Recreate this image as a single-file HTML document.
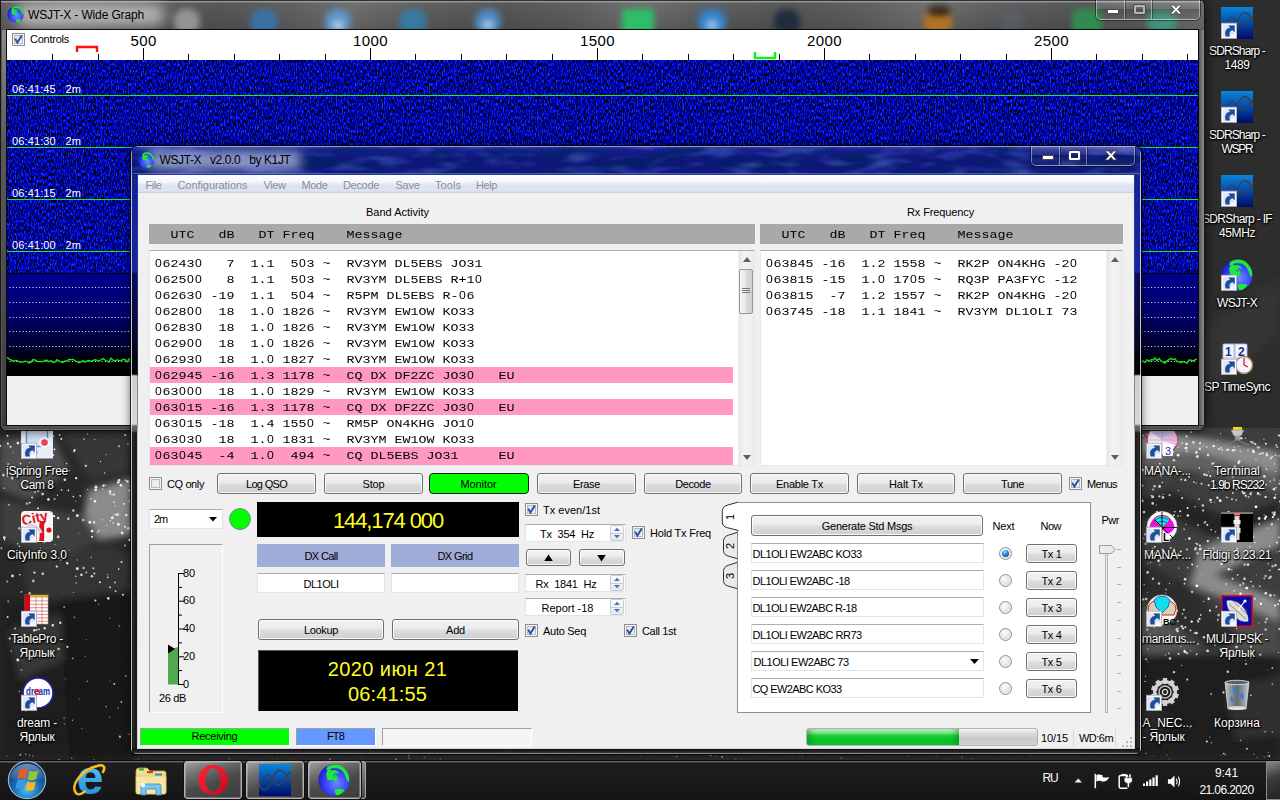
<!DOCTYPE html><html><head><meta charset="utf-8"><title>WSJT-X</title><style>
*{box-sizing:border-box;margin:0;padding:0}
html,body{width:1280px;height:800px;overflow:hidden;background:#2b2b2b;font-family:"Liberation Sans", "DejaVu Sans", sans-serif;font-size:11px;}
.t{position:absolute;white-space:pre;}
.abs{position:absolute}
.btn{position:absolute;border:1px solid #707070;border-radius:3px;background:linear-gradient(#f2f2f2 0,#ebebeb 48%,#dddddd 52%,#cfcfcf 100%);box-shadow:inset 0 0 0 1px rgba(255,255,255,.85);}
.edit{position:absolute;background:#fff;border:1px solid #dfe4ec;border-top-color:#abadb3;border-radius:1px}
.mono{font-family:"Liberation Mono", "DejaVu Sans Mono", monospace;}
.z{display:inline-block;width:8px;text-align:center;font-family:"Liberation Sans", "DejaVu Sans", sans-serif;font-size:12.2px;line-height:1}
.cb{position:absolute;width:13px;height:13px;border:1px solid #8e8f8f;background:linear-gradient(135deg,#dfe1e4,#f7f7f8);box-shadow:inset 0 0 0 1px #f4f4f4, inset 0 0 0 2px #b5bbc4;}
.lbl{color:#fff;text-shadow:0 1px 2px #000,0 0 3px #000,1px 1px 1px #000;}
</style></head><body>
<svg class="abs" style="left:0;top:0" width="1280" height="800" viewBox="0 0 1280 800"><defs><filter id="nz" x="0" y="0" width="100%" height="100%"><feTurbulence type="fractalNoise" baseFrequency="0.035" numOctaves="3" seed="4"/><feColorMatrix type="matrix" values="0 0 0 0 1  0 0 0 0 1  0 0 0 0 1  1.2 0 0 0 -0.38"/></filter><filter id="nz2" x="0" y="0" width="100%" height="100%"><feTurbulence type="fractalNoise" baseFrequency="0.6" numOctaves="2" seed="9"/><feColorMatrix type="matrix" values="0 0 0 0 1  0 0 0 0 1  0 0 0 0 1  0.9 0 0 0 -0.32"/></filter><filter id="bl"><feGaussianBlur stdDeviation="6"/></filter><filter id="bl2"><feGaussianBlur stdDeviation="0.6"/></filter><filter id="bl3"><feGaussianBlur stdDeviation="3.5"/></filter></defs><rect width="1280" height="800" fill="#2a2a2a"/><rect x="1200" y="0" width="80" height="430" fill="#2d2d2d"/><polygon points="1200,330 1280,280 1280,330 1200,400" fill="#363636" filter="url(#bl)"/><rect x="1138" y="428" width="142" height="232" fill="#3c3c3c"/><g filter="url(#bl3)"><polygon points="1138,436 1180,434 1280,452 1280,474 1200,452 1138,452" fill="#8c8c8c"/><polygon points="1138,452 1200,452 1280,474 1280,492 1190,470 1138,476" fill="#5e5e5e"/><polygon points="1138,500 1170,490 1230,520 1280,500 1280,520 1230,545 1170,515 1138,520" fill="#222"/><polygon points="1200,548 1280,520 1280,545 1215,575 1280,600 1280,622 1190,585" fill="#8a8a8a"/><polygon points="1138,560 1190,585 1240,640 1210,650 1138,590" fill="#2a2a2a"/><polygon points="1138,600 1200,650 1138,655" fill="#555"/><polygon points="1240,610 1280,625 1280,660 1230,655" fill="#4a4a4a"/><rect x="1138" y="655" width="142" height="105" fill="#1b1b1b"/><polygon points="1225,690 1280,675 1280,735 1235,740" fill="#2e2e2e"/><polygon points="1138,700 1180,720 1138,750" fill="#262626"/></g><rect x="0" y="428" width="134" height="332" fill="#262626"/><g filter="url(#bl3)"><polygon points="0,440 50,432 70,470 30,500 0,490" fill="#4e4e4e"/><polygon points="60,432 134,432 134,470 90,480" fill="#343434"/><polygon points="88,490 134,478 134,535 100,540 84,515" fill="#8a8a8a"/><polygon points="0,500 84,515 100,540 60,560 0,540" fill="#3e3e3e"/><polygon points="20,560 110,545 134,560 134,600 30,600" fill="#303030"/><rect x="0" y="600" width="134" height="160" fill="#1a1a1a"/><polygon points="8,630 60,615 75,655 20,680" fill="#343434"/><polygon points="60,600 134,590 134,760 70,760" fill="#151515"/></g><rect x="0" y="428" width="1280" height="372" fill="#fff" filter="url(#nz2)" opacity="0.07"/><g filter="url(#bl2)"><circle cx="1186.7" cy="451.3" r="1.2" fill="rgb(179,179,179)"/><circle cx="1255.3" cy="444.0" r="1.1" fill="rgb(234,234,234)"/><circle cx="1171.6" cy="443.0" r="0.9" fill="rgb(200,200,200)"/><circle cx="1154.5" cy="486.3" r="1.3" fill="rgb(185,185,185)"/><circle cx="1272.7" cy="512.7" r="1.1" fill="rgb(177,177,177)"/><circle cx="1221.6" cy="482.8" r="1.5" fill="rgb(175,175,175)"/><circle cx="1218.8" cy="449.0" r="0.9" fill="rgb(239,239,239)"/><circle cx="1158.3" cy="471.5" r="1.3" fill="rgb(193,193,193)"/><circle cx="1156.2" cy="505.1" r="0.7" fill="rgb(182,182,182)"/><circle cx="1217.6" cy="440.0" r="0.6" fill="rgb(196,196,196)"/><circle cx="1210.5" cy="500.1" r="1.3" fill="rgb(229,229,229)"/><circle cx="1222.8" cy="490.0" r="0.8" fill="rgb(193,193,193)"/><circle cx="1238.5" cy="463.2" r="1.1" fill="rgb(237,237,237)"/><circle cx="1210.3" cy="476.0" r="0.9" fill="rgb(247,247,247)"/><circle cx="1277.3" cy="447.1" r="0.9" fill="rgb(213,213,213)"/><circle cx="1163.0" cy="494.6" r="0.5" fill="rgb(255,255,255)"/><circle cx="1152.7" cy="503.4" r="1.3" fill="rgb(210,210,210)"/><circle cx="1188.9" cy="476.8" r="1.0" fill="rgb(228,228,228)"/><circle cx="1151.5" cy="444.0" r="0.8" fill="rgb(255,255,255)"/><circle cx="1151.0" cy="525.6" r="0.8" fill="rgb(243,243,243)"/><circle cx="1279.0" cy="537.2" r="0.8" fill="rgb(219,219,219)"/><circle cx="1264.4" cy="476.4" r="1.4" fill="rgb(215,215,215)"/><circle cx="1165.2" cy="447.0" r="0.6" fill="rgb(206,206,206)"/><circle cx="1159.8" cy="463.7" r="0.9" fill="rgb(233,233,233)"/><circle cx="1153.1" cy="489.5" r="1.0" fill="rgb(187,187,187)"/><circle cx="1255.1" cy="542.6" r="0.8" fill="rgb(223,223,223)"/><circle cx="1278.1" cy="519.4" r="0.9" fill="rgb(199,199,199)"/><circle cx="1162.8" cy="454.6" r="0.7" fill="rgb(199,199,199)"/><circle cx="1143.7" cy="538.4" r="0.7" fill="rgb(206,206,206)"/><circle cx="1142.6" cy="485.6" r="0.9" fill="rgb(242,242,242)"/><circle cx="1186.0" cy="448.1" r="1.4" fill="rgb(249,249,249)"/><circle cx="1232.4" cy="526.7" r="1.0" fill="rgb(241,241,241)"/><circle cx="1196.1" cy="483.1" r="0.6" fill="rgb(251,251,251)"/><circle cx="1197.3" cy="456.4" r="1.5" fill="rgb(226,226,226)"/><circle cx="1164.4" cy="475.5" r="0.6" fill="rgb(170,170,170)"/><circle cx="1220.2" cy="500.7" r="1.4" fill="rgb(248,248,248)"/><circle cx="1145.5" cy="543.9" r="1.1" fill="rgb(189,189,189)"/><circle cx="1229.5" cy="554.3" r="1.1" fill="rgb(230,230,230)"/><circle cx="1159.0" cy="540.7" r="1.5" fill="rgb(229,229,229)"/><circle cx="1208.3" cy="471.9" r="0.6" fill="rgb(213,213,213)"/><circle cx="1244.2" cy="493.3" r="1.2" fill="rgb(236,236,236)"/><circle cx="1145.2" cy="553.7" r="1.0" fill="rgb(188,188,188)"/><circle cx="1237.2" cy="549.0" r="1.3" fill="rgb(208,208,208)"/><circle cx="1277.0" cy="542.5" r="1.2" fill="rgb(203,203,203)"/><circle cx="1213.5" cy="548.3" r="0.9" fill="rgb(198,198,198)"/><circle cx="1215.5" cy="531.7" r="0.8" fill="rgb(198,198,198)"/><circle cx="1226.6" cy="532.9" r="1.3" fill="rgb(194,194,194)"/><circle cx="1253.2" cy="536.7" r="1.2" fill="rgb(199,199,199)"/><circle cx="1169.6" cy="495.1" r="1.2" fill="rgb(173,173,173)"/><circle cx="1251.0" cy="492.4" r="0.7" fill="rgb(247,247,247)"/><circle cx="1274.0" cy="489.2" r="1.4" fill="rgb(214,214,214)"/><circle cx="1273.8" cy="478.7" r="0.7" fill="rgb(199,199,199)"/><circle cx="1206.9" cy="475.2" r="1.0" fill="rgb(248,248,248)"/><circle cx="1258.0" cy="493.4" r="1.2" fill="rgb(252,252,252)"/><circle cx="1153.7" cy="516.6" r="1.4" fill="rgb(195,195,195)"/><circle cx="1208.0" cy="454.9" r="1.3" fill="rgb(212,212,212)"/><circle cx="1154.0" cy="553.1" r="1.2" fill="rgb(229,229,229)"/><circle cx="1197.4" cy="553.2" r="1.2" fill="rgb(191,191,191)"/><circle cx="1279.0" cy="435.5" r="1.1" fill="rgb(229,229,229)"/><circle cx="1253.3" cy="450.7" r="1.3" fill="rgb(230,230,230)"/><circle cx="1232.7" cy="476.9" r="1.0" fill="rgb(186,186,186)"/><circle cx="1145.0" cy="534.3" r="1.2" fill="rgb(183,183,183)"/><circle cx="1214.7" cy="551.5" r="0.9" fill="rgb(194,194,194)"/><circle cx="1256.0" cy="459.0" r="0.8" fill="rgb(207,207,207)"/><circle cx="1211.2" cy="529.8" r="0.8" fill="rgb(239,239,239)"/><circle cx="1199.8" cy="448.8" r="1.4" fill="rgb(215,215,215)"/><circle cx="1265.9" cy="516.8" r="1.3" fill="rgb(236,236,236)"/><circle cx="1200.0" cy="549.5" r="1.0" fill="rgb(238,238,238)"/><circle cx="1163.0" cy="497.4" r="1.4" fill="rgb(193,193,193)"/><circle cx="1226.0" cy="531.3" r="0.6" fill="rgb(188,188,188)"/><circle cx="1207.3" cy="524.8" r="1.1" fill="rgb(211,211,211)"/><circle cx="1236.2" cy="499.9" r="1.0" fill="rgb(183,183,183)"/><circle cx="1263.9" cy="439.3" r="0.7" fill="rgb(175,175,175)"/><circle cx="1248.6" cy="497.0" r="1.1" fill="rgb(178,178,178)"/><circle cx="1203.2" cy="510.4" r="1.0" fill="rgb(235,235,235)"/><circle cx="1169.5" cy="467.5" r="1.0" fill="rgb(231,231,231)"/><circle cx="1212.1" cy="463.7" r="1.0" fill="rgb(203,203,203)"/><circle cx="1269.3" cy="546.3" r="0.7" fill="rgb(227,227,227)"/><circle cx="1160.9" cy="447.6" r="0.9" fill="rgb(179,179,179)"/><circle cx="1234.6" cy="486.8" r="0.7" fill="rgb(208,208,208)"/><circle cx="1250.2" cy="546.8" r="0.7" fill="rgb(252,252,252)"/><circle cx="1233.1" cy="450.3" r="1.4" fill="rgb(229,229,229)"/><circle cx="1172.3" cy="553.9" r="0.9" fill="rgb(232,232,232)"/><circle cx="1164.5" cy="517.5" r="0.7" fill="rgb(225,225,225)"/><circle cx="1279.2" cy="483.7" r="0.9" fill="rgb(215,215,215)"/><circle cx="1186.0" cy="524.4" r="0.5" fill="rgb(240,240,240)"/><circle cx="1205.3" cy="522.0" r="0.9" fill="rgb(236,236,236)"/><circle cx="1228.1" cy="497.6" r="0.6" fill="rgb(199,199,199)"/><circle cx="1276.1" cy="445.4" r="0.8" fill="rgb(175,175,175)"/><circle cx="1267.0" cy="455.2" r="1.3" fill="rgb(224,224,224)"/><circle cx="1259.2" cy="518.5" r="1.4" fill="rgb(221,221,221)"/><circle cx="1162.6" cy="549.7" r="1.1" fill="rgb(211,211,211)"/><circle cx="1154.3" cy="439.4" r="1.2" fill="rgb(224,224,224)"/><circle cx="1265.5" cy="466.4" r="0.5" fill="rgb(181,181,181)"/><circle cx="1252.6" cy="442.7" r="1.4" fill="rgb(178,178,178)"/><circle cx="1178.5" cy="447.6" r="0.5" fill="rgb(240,240,240)"/><circle cx="1199.7" cy="549.2" r="1.1" fill="rgb(175,175,175)"/><circle cx="1214.7" cy="462.5" r="0.6" fill="rgb(190,190,190)"/><circle cx="1178.1" cy="455.2" r="1.4" fill="rgb(250,250,250)"/><circle cx="1184.1" cy="529.2" r="0.8" fill="rgb(234,234,234)"/><circle cx="1234.8" cy="466.6" r="1.3" fill="rgb(202,202,202)"/><circle cx="1147.1" cy="434.4" r="1.0" fill="rgb(194,194,194)"/><circle cx="1213.0" cy="463.4" r="0.9" fill="rgb(254,254,254)"/><circle cx="1255.0" cy="487.3" r="1.0" fill="rgb(220,220,220)"/><circle cx="1275.9" cy="471.4" r="0.7" fill="rgb(199,199,199)"/><circle cx="1189.3" cy="538.5" r="1.2" fill="rgb(251,251,251)"/><circle cx="1161.3" cy="558.6" r="1.5" fill="rgb(186,186,186)"/><circle cx="1144.0" cy="512.1" r="1.4" fill="rgb(225,225,225)"/><circle cx="1164.5" cy="442.8" r="1.3" fill="rgb(234,234,234)"/><circle cx="1234.5" cy="468.1" r="0.7" fill="rgb(207,207,207)"/><circle cx="1148.2" cy="455.7" r="0.8" fill="rgb(170,170,170)"/><circle cx="1178.3" cy="555.1" r="1.5" fill="rgb(240,240,240)"/><circle cx="1186.6" cy="436.4" r="1.4" fill="rgb(197,197,197)"/><circle cx="1191.2" cy="432.1" r="0.9" fill="rgb(230,230,230)"/><circle cx="1180.5" cy="516.0" r="0.7" fill="rgb(170,170,170)"/><circle cx="1154.5" cy="536.6" r="0.6" fill="rgb(245,245,245)"/><circle cx="1147.8" cy="434.9" r="0.8" fill="rgb(199,199,199)"/><circle cx="1153.7" cy="554.6" r="1.4" fill="rgb(189,189,189)"/><circle cx="1232.7" cy="523.6" r="1.4" fill="rgb(219,219,219)"/><circle cx="1247.5" cy="524.2" r="1.0" fill="rgb(206,206,206)"/><circle cx="1241.9" cy="514.3" r="0.5" fill="rgb(235,235,235)"/><circle cx="1228.6" cy="525.9" r="1.3" fill="rgb(187,187,187)"/><circle cx="1267.6" cy="528.4" r="1.1" fill="rgb(172,172,172)"/><circle cx="1256.0" cy="506.8" r="1.4" fill="rgb(252,252,252)"/><circle cx="1173.7" cy="436.0" r="0.6" fill="rgb(216,216,216)"/><circle cx="1274.4" cy="480.2" r="1.0" fill="rgb(176,176,176)"/><circle cx="1228.6" cy="512.2" r="1.2" fill="rgb(232,232,232)"/><circle cx="1178.4" cy="490.5" r="0.6" fill="rgb(234,234,234)"/><circle cx="1265.9" cy="443.8" r="1.0" fill="rgb(230,230,230)"/><circle cx="1176.8" cy="441.5" r="0.8" fill="rgb(196,196,196)"/><circle cx="1173.8" cy="515.2" r="1.0" fill="rgb(218,218,218)"/><circle cx="1152.6" cy="548.5" r="0.8" fill="rgb(175,175,175)"/><circle cx="1227.1" cy="514.3" r="0.6" fill="rgb(188,188,188)"/><circle cx="1187.8" cy="515.4" r="1.2" fill="rgb(249,249,249)"/><circle cx="1220.4" cy="433.6" r="0.6" fill="rgb(204,204,204)"/><circle cx="1276.2" cy="444.7" r="0.7" fill="rgb(232,232,232)"/><circle cx="1182.1" cy="498.1" r="1.0" fill="rgb(229,229,229)"/><circle cx="1247.9" cy="559.1" r="1.0" fill="rgb(209,209,209)"/><circle cx="1277.0" cy="551.8" r="0.5" fill="rgb(228,228,228)"/><circle cx="1152.6" cy="496.8" r="1.5" fill="rgb(204,204,204)"/><circle cx="1195.4" cy="549.3" r="1.4" fill="rgb(179,179,179)"/><circle cx="1222.2" cy="450.1" r="1.0" fill="rgb(216,216,216)"/><circle cx="1160.3" cy="537.0" r="1.0" fill="rgb(184,184,184)"/><circle cx="1239.1" cy="461.6" r="1.4" fill="rgb(232,232,232)"/><circle cx="1196.4" cy="452.4" r="1.4" fill="rgb(227,227,227)"/><circle cx="1197.9" cy="525.1" r="0.9" fill="rgb(218,218,218)"/><circle cx="1185.6" cy="539.5" r="0.5" fill="rgb(213,213,213)"/><circle cx="1257.8" cy="447.4" r="1.4" fill="rgb(171,171,171)"/><circle cx="1266.4" cy="469.1" r="0.9" fill="rgb(220,220,220)"/><circle cx="1195.8" cy="543.4" r="0.6" fill="rgb(224,224,224)"/><circle cx="1246.3" cy="541.3" r="0.8" fill="rgb(176,176,176)"/><circle cx="1257.2" cy="468.6" r="1.4" fill="rgb(201,201,201)"/><circle cx="1276.0" cy="487.8" r="0.8" fill="rgb(217,217,217)"/><circle cx="1250.3" cy="486.8" r="0.5" fill="rgb(250,250,250)"/><circle cx="1197.2" cy="544.1" r="1.1" fill="rgb(196,196,196)"/><circle cx="1241.3" cy="438.3" r="1.2" fill="rgb(227,227,227)"/><circle cx="1226.9" cy="449.7" r="1.4" fill="rgb(232,232,232)"/><circle cx="1148.8" cy="550.6" r="0.6" fill="rgb(230,230,230)"/><circle cx="1199.3" cy="468.1" r="0.8" fill="rgb(253,253,253)"/><circle cx="1177.9" cy="516.0" r="0.8" fill="rgb(241,241,241)"/><circle cx="1234.3" cy="447.3" r="1.1" fill="rgb(179,179,179)"/><circle cx="1170.7" cy="548.0" r="1.0" fill="rgb(198,198,198)"/><circle cx="1204.5" cy="474.6" r="1.3" fill="rgb(224,224,224)"/><circle cx="1161.3" cy="456.6" r="0.6" fill="rgb(213,213,213)"/><circle cx="1218.7" cy="472.9" r="0.9" fill="rgb(242,242,242)"/><circle cx="1169.9" cy="434.6" r="1.4" fill="rgb(219,219,219)"/><circle cx="1199.1" cy="499.1" r="0.9" fill="rgb(213,213,213)"/><circle cx="1245.8" cy="495.8" r="1.1" fill="rgb(216,216,216)"/><circle cx="1159.4" cy="496.4" r="1.1" fill="rgb(197,197,197)"/><circle cx="1154.8" cy="546.8" r="0.9" fill="rgb(252,252,252)"/><circle cx="1203.5" cy="554.1" r="1.3" fill="rgb(172,172,172)"/><circle cx="1159.6" cy="486.4" r="1.3" fill="rgb(230,230,230)"/><circle cx="1275.6" cy="494.7" r="0.6" fill="rgb(237,237,237)"/><circle cx="1260.1" cy="556.4" r="0.7" fill="rgb(183,183,183)"/><circle cx="1172.9" cy="451.5" r="1.5" fill="rgb(183,183,183)"/><circle cx="1271.9" cy="524.4" r="1.1" fill="rgb(228,228,228)"/><circle cx="1153.7" cy="531.4" r="0.5" fill="rgb(186,186,186)"/><circle cx="1174.1" cy="549.7" r="1.1" fill="rgb(208,208,208)"/><circle cx="1274.8" cy="512.2" r="1.0" fill="rgb(225,225,225)"/><circle cx="1238.4" cy="446.4" r="0.6" fill="rgb(237,237,237)"/><circle cx="1272.2" cy="456.5" r="0.8" fill="rgb(246,246,246)"/><circle cx="1142.2" cy="500.8" r="1.5" fill="rgb(205,205,205)"/><circle cx="1274.3" cy="514.5" r="1.4" fill="rgb(230,230,230)"/><circle cx="1214.6" cy="502.0" r="0.5" fill="rgb(222,222,222)"/><circle cx="1239.2" cy="471.3" r="0.5" fill="rgb(233,233,233)"/><circle cx="1264.1" cy="514.8" r="0.6" fill="rgb(199,199,199)"/><circle cx="1234.1" cy="550.4" r="0.7" fill="rgb(174,174,174)"/><circle cx="1238.0" cy="523.9" r="0.9" fill="rgb(220,220,220)"/><circle cx="1169.3" cy="534.0" r="1.2" fill="rgb(234,234,234)"/><circle cx="1151.3" cy="495.4" r="0.7" fill="rgb(194,194,194)"/><circle cx="1173.9" cy="460.3" r="1.3" fill="rgb(207,207,207)"/><circle cx="1157.0" cy="511.8" r="1.1" fill="rgb(198,198,198)"/><circle cx="1208.9" cy="548.5" r="0.6" fill="rgb(246,246,246)"/><circle cx="1162.2" cy="482.4" r="0.7" fill="rgb(246,246,246)"/><circle cx="1161.6" cy="438.6" r="0.6" fill="rgb(220,220,220)"/><circle cx="1204.1" cy="523.1" r="0.8" fill="rgb(184,184,184)"/><circle cx="1279.7" cy="551.2" r="0.8" fill="rgb(193,193,193)"/><circle cx="1232.0" cy="499.2" r="1.0" fill="rgb(209,209,209)"/><circle cx="1233.7" cy="480.5" r="0.9" fill="rgb(212,212,212)"/><circle cx="1203.1" cy="445.9" r="0.6" fill="rgb(180,180,180)"/><circle cx="1190.5" cy="650.8" r="0.6" fill="rgb(196,196,196)"/><circle cx="1194.5" cy="633.0" r="0.8" fill="rgb(225,225,225)"/><circle cx="1154.1" cy="627.0" r="0.7" fill="rgb(239,239,239)"/><circle cx="1268.9" cy="578.3" r="0.8" fill="rgb(230,230,230)"/><circle cx="1146.2" cy="599.0" r="1.2" fill="rgb(221,221,221)"/><circle cx="1147.6" cy="563.3" r="0.6" fill="rgb(177,177,177)"/><circle cx="1177.5" cy="631.0" r="1.3" fill="rgb(213,213,213)"/><circle cx="1192.1" cy="591.8" r="1.4" fill="rgb(175,175,175)"/><circle cx="1178.2" cy="628.1" r="0.8" fill="rgb(205,205,205)"/><circle cx="1183.0" cy="628.5" r="1.0" fill="rgb(251,251,251)"/><circle cx="1272.6" cy="566.2" r="1.2" fill="rgb(183,183,183)"/><circle cx="1207.6" cy="650.9" r="1.4" fill="rgb(219,219,219)"/><circle cx="1251.0" cy="646.8" r="1.2" fill="rgb(186,186,186)"/><circle cx="1270.1" cy="577.4" r="1.2" fill="rgb(208,208,208)"/><circle cx="1255.5" cy="633.4" r="1.0" fill="rgb(211,211,211)"/><circle cx="1260.9" cy="603.8" r="1.2" fill="rgb(246,246,246)"/><circle cx="1152.9" cy="578.7" r="1.2" fill="rgb(201,201,201)"/><circle cx="1198.3" cy="621.7" r="0.9" fill="rgb(239,239,239)"/><circle cx="1187.0" cy="653.1" r="1.3" fill="rgb(179,179,179)"/><circle cx="1178.6" cy="568.0" r="0.6" fill="rgb(233,233,233)"/><circle cx="1278.4" cy="652.4" r="0.7" fill="rgb(187,187,187)"/><circle cx="1199.5" cy="618.9" r="1.1" fill="rgb(238,238,238)"/><circle cx="1258.9" cy="623.1" r="0.6" fill="rgb(207,207,207)"/><circle cx="1182.5" cy="613.9" r="0.8" fill="rgb(203,203,203)"/><circle cx="1169.5" cy="583.5" r="0.7" fill="rgb(189,189,189)"/><circle cx="1180.8" cy="646.2" r="0.7" fill="rgb(178,178,178)"/><circle cx="1196.7" cy="654.3" r="1.0" fill="rgb(199,199,199)"/><circle cx="1231.7" cy="569.6" r="0.9" fill="rgb(174,174,174)"/><circle cx="1156.1" cy="605.1" r="1.2" fill="rgb(227,227,227)"/><circle cx="1268.2" cy="563.8" r="0.8" fill="rgb(185,185,185)"/><circle cx="1149.0" cy="617.0" r="1.2" fill="rgb(194,194,194)"/><circle cx="1270.4" cy="595.4" r="1.3" fill="rgb(227,227,227)"/><circle cx="1225.2" cy="633.6" r="1.1" fill="rgb(170,170,170)"/><circle cx="1156.6" cy="616.6" r="1.1" fill="rgb(197,197,197)"/><circle cx="1147.2" cy="592.3" r="0.5" fill="rgb(202,202,202)"/><circle cx="1147.3" cy="629.6" r="1.3" fill="rgb(171,171,171)"/><circle cx="1255.0" cy="598.9" r="0.8" fill="rgb(249,249,249)"/><circle cx="1185.1" cy="579.3" r="1.2" fill="rgb(240,240,240)"/><circle cx="1208.7" cy="598.8" r="1.2" fill="rgb(254,254,254)"/><circle cx="1217.9" cy="620.7" r="0.6" fill="rgb(190,190,190)"/><circle cx="1196.9" cy="585.8" r="1.4" fill="rgb(255,255,255)"/><circle cx="1184.4" cy="650.6" r="0.8" fill="rgb(242,242,242)"/><circle cx="1263.9" cy="599.3" r="0.5" fill="rgb(216,216,216)"/><circle cx="1230.9" cy="597.1" r="0.9" fill="rgb(170,170,170)"/><circle cx="1201.9" cy="574.9" r="0.6" fill="rgb(181,181,181)"/><circle cx="1198.1" cy="643.9" r="0.9" fill="rgb(190,190,190)"/><circle cx="1159.9" cy="564.9" r="0.6" fill="rgb(220,220,220)"/><circle cx="1154.3" cy="619.1" r="0.8" fill="rgb(234,234,234)"/><circle cx="1165.7" cy="593.1" r="0.6" fill="rgb(191,191,191)"/><circle cx="1269.7" cy="570.3" r="0.9" fill="rgb(195,195,195)"/><circle cx="1183.6" cy="639.5" r="0.5" fill="rgb(231,231,231)"/><circle cx="1185.4" cy="617.7" r="1.1" fill="rgb(181,181,181)"/><circle cx="1266.8" cy="618.9" r="1.2" fill="rgb(190,190,190)"/><circle cx="1230.4" cy="641.4" r="1.1" fill="rgb(248,248,248)"/><circle cx="1258.8" cy="638.8" r="0.7" fill="rgb(197,197,197)"/><circle cx="1147.8" cy="649.2" r="0.6" fill="rgb(215,215,215)"/><circle cx="1159.0" cy="583.5" r="1.2" fill="rgb(194,194,194)"/><circle cx="1147.7" cy="613.4" r="1.2" fill="rgb(174,174,174)"/><circle cx="1234.2" cy="590.8" r="0.9" fill="rgb(228,228,228)"/><circle cx="1217.9" cy="619.6" r="0.8" fill="rgb(223,223,223)"/><circle cx="1184.5" cy="583.7" r="0.9" fill="rgb(217,217,217)"/><circle cx="1203.7" cy="601.6" r="0.5" fill="rgb(249,249,249)"/><circle cx="1278.1" cy="604.2" r="0.9" fill="rgb(249,249,249)"/><circle cx="1249.6" cy="603.5" r="0.7" fill="rgb(230,230,230)"/><circle cx="1197.2" cy="566.4" r="0.8" fill="rgb(216,216,216)"/><circle cx="1154.7" cy="602.0" r="1.0" fill="rgb(175,175,175)"/><circle cx="1147.6" cy="572.4" r="1.3" fill="rgb(210,210,210)"/><circle cx="1249.3" cy="608.6" r="0.5" fill="rgb(234,234,234)"/><circle cx="1265.5" cy="622.0" r="1.2" fill="rgb(173,173,173)"/><circle cx="1260.3" cy="654.6" r="1.2" fill="rgb(184,184,184)"/><circle cx="1168.7" cy="653.3" r="0.9" fill="rgb(191,191,191)"/><circle cx="1236.7" cy="628.5" r="0.7" fill="rgb(214,214,214)"/><circle cx="1226.2" cy="584.0" r="0.8" fill="rgb(248,248,248)"/><circle cx="1179.9" cy="637.5" r="0.6" fill="rgb(234,234,234)"/><circle cx="1275.1" cy="605.6" r="1.0" fill="rgb(248,248,248)"/><circle cx="1211.8" cy="590.3" r="0.5" fill="rgb(193,193,193)"/><circle cx="1197.7" cy="620.5" r="0.8" fill="rgb(211,211,211)"/><circle cx="1265.6" cy="576.0" r="1.2" fill="rgb(184,184,184)"/><circle cx="1248.0" cy="564.6" r="1.3" fill="rgb(227,227,227)"/><circle cx="1218.6" cy="615.1" r="1.3" fill="rgb(183,183,183)"/><circle cx="1176.8" cy="610.9" r="1.3" fill="rgb(217,217,217)"/><circle cx="1178.5" cy="654.1" r="1.0" fill="rgb(216,216,216)"/><circle cx="1187.7" cy="567.7" r="0.7" fill="rgb(248,248,248)"/><circle cx="1244.6" cy="564.6" r="1.2" fill="rgb(202,202,202)"/><circle cx="1184.8" cy="651.8" r="1.3" fill="rgb(254,254,254)"/><circle cx="1265.6" cy="629.6" r="1.2" fill="rgb(198,198,198)"/><circle cx="1162.6" cy="618.5" r="0.9" fill="rgb(235,235,235)"/><circle cx="1192.2" cy="564.5" r="0.9" fill="rgb(248,248,248)"/><circle cx="1232.1" cy="562.1" r="0.5" fill="rgb(215,215,215)"/><circle cx="1183.9" cy="609.7" r="1.0" fill="rgb(222,222,222)"/><circle cx="1222.5" cy="616.0" r="0.7" fill="rgb(249,249,249)"/><circle cx="1256.3" cy="575.1" r="0.5" fill="rgb(201,201,201)"/><circle cx="1239.6" cy="602.8" r="0.6" fill="rgb(188,188,188)"/><circle cx="1262.2" cy="634.3" r="0.9" fill="rgb(203,203,203)"/><circle cx="1275.5" cy="565.3" r="1.2" fill="rgb(214,214,214)"/><circle cx="1224.1" cy="615.0" r="1.0" fill="rgb(236,236,236)"/><circle cx="1243.2" cy="583.6" r="1.3" fill="rgb(175,175,175)"/><circle cx="1150.5" cy="562.4" r="0.7" fill="rgb(190,190,190)"/><circle cx="1150.1" cy="634.0" r="0.5" fill="rgb(240,240,240)"/><circle cx="1232.6" cy="578.7" r="0.9" fill="rgb(236,236,236)"/><circle cx="1225.9" cy="608.2" r="1.1" fill="rgb(248,248,248)"/><circle cx="1166.1" cy="589.4" r="0.8" fill="rgb(176,176,176)"/><circle cx="1279.2" cy="628.8" r="0.9" fill="rgb(238,238,238)"/><circle cx="1142.9" cy="640.2" r="1.2" fill="rgb(229,229,229)"/><circle cx="1153.1" cy="622.3" r="0.7" fill="rgb(183,183,183)"/><circle cx="1178.1" cy="621.2" r="0.6" fill="rgb(203,203,203)"/><circle cx="1240.2" cy="585.3" r="1.0" fill="rgb(225,225,225)"/><circle cx="1236.6" cy="647.1" r="1.4" fill="rgb(207,207,207)"/><circle cx="1230.6" cy="651.7" r="0.7" fill="rgb(234,234,234)"/><circle cx="1144.1" cy="584.7" r="0.7" fill="rgb(195,195,195)"/><circle cx="1272.4" cy="731.9" r="0.7" fill="rgb(169,169,169)"/><circle cx="1187.3" cy="679.6" r="1.1" fill="rgb(200,200,200)"/><circle cx="1269.2" cy="756.1" r="1.1" fill="rgb(188,188,188)"/><circle cx="1206.8" cy="741.5" r="1.0" fill="rgb(229,229,229)"/><circle cx="1145.7" cy="753.4" r="0.7" fill="rgb(159,159,159)"/><circle cx="1250.9" cy="695.3" r="0.9" fill="rgb(192,192,192)"/><circle cx="1267.7" cy="669.9" r="0.5" fill="rgb(133,133,133)"/><circle cx="1227.8" cy="671.7" r="1.2" fill="rgb(209,209,209)"/><circle cx="1146.0" cy="659.3" r="1.0" fill="rgb(201,201,201)"/><circle cx="1147.9" cy="662.0" r="0.5" fill="rgb(229,229,229)"/><circle cx="1223.5" cy="692.4" r="1.1" fill="rgb(224,224,224)"/><circle cx="1215.7" cy="723.4" r="1.1" fill="rgb(216,216,216)"/><circle cx="1268.2" cy="752.3" r="0.6" fill="rgb(146,146,146)"/><circle cx="1170.0" cy="658.5" r="1.2" fill="rgb(223,223,223)"/><circle cx="1246.0" cy="664.0" r="1.0" fill="rgb(200,200,200)"/><circle cx="1181.7" cy="665.3" r="0.6" fill="rgb(216,216,216)"/><circle cx="1231.2" cy="685.3" r="0.7" fill="rgb(153,153,153)"/><circle cx="1144.9" cy="681.4" r="0.7" fill="rgb(211,211,211)"/><circle cx="1246.9" cy="748.8" r="1.0" fill="rgb(197,197,197)"/><circle cx="1211.5" cy="742.7" r="0.9" fill="rgb(123,123,123)"/><circle cx="1250.9" cy="658.2" r="0.9" fill="rgb(132,132,132)"/><circle cx="1189.9" cy="727.6" r="0.9" fill="rgb(147,147,147)"/><circle cx="1240.6" cy="740.3" r="0.9" fill="rgb(156,156,156)"/><circle cx="1165.5" cy="655.1" r="0.6" fill="rgb(217,217,217)"/><circle cx="1245.6" cy="660.6" r="0.7" fill="rgb(132,132,132)"/><circle cx="1209.8" cy="737.1" r="0.6" fill="rgb(183,183,183)"/><circle cx="1223.8" cy="753.6" r="0.9" fill="rgb(193,193,193)"/><circle cx="1272.3" cy="684.2" r="0.7" fill="rgb(209,209,209)"/><circle cx="1174.0" cy="672.1" r="1.2" fill="rgb(218,218,218)"/><circle cx="1153.2" cy="736.2" r="1.0" fill="rgb(220,220,220)"/><circle cx="1156.4" cy="688.6" r="0.6" fill="rgb(170,170,170)"/><circle cx="1265.1" cy="731.8" r="0.8" fill="rgb(202,202,202)"/><circle cx="1145.5" cy="676.2" r="0.7" fill="rgb(189,189,189)"/><circle cx="1211.2" cy="694.1" r="1.1" fill="rgb(149,149,149)"/><circle cx="1272.3" cy="668.1" r="0.9" fill="rgb(208,208,208)"/><circle cx="1143.1" cy="435.6" r="0.9" fill="rgb(209,209,209)"/><circle cx="1149.4" cy="437.3" r="0.9" fill="rgb(229,229,229)"/><circle cx="1155.8" cy="438.1" r="0.8" fill="rgb(229,229,229)"/><circle cx="1162.7" cy="438.9" r="0.9" fill="rgb(248,248,248)"/><circle cx="1169.9" cy="438.9" r="0.8" fill="rgb(215,215,215)"/><circle cx="1175.8" cy="440.4" r="0.9" fill="rgb(212,212,212)"/><circle cx="1182.2" cy="443.1" r="0.8" fill="rgb(242,242,242)"/><circle cx="1186.6" cy="444.0" r="1.3" fill="rgb(246,246,246)"/><circle cx="1193.4" cy="442.4" r="1.3" fill="rgb(217,217,217)"/><circle cx="1200.0" cy="443.1" r="1.0" fill="rgb(250,250,250)"/><circle cx="1206.7" cy="446.9" r="0.9" fill="rgb(201,201,201)"/><circle cx="1213.7" cy="446.1" r="1.2" fill="rgb(254,254,254)"/><circle cx="1220.9" cy="448.1" r="1.0" fill="rgb(214,214,214)"/><circle cx="1228.3" cy="449.6" r="1.1" fill="rgb(237,237,237)"/><circle cx="1235.5" cy="449.9" r="1.0" fill="rgb(220,220,220)"/><circle cx="1240.5" cy="451.4" r="0.9" fill="rgb(225,225,225)"/><circle cx="1248.1" cy="450.6" r="1.0" fill="rgb(229,229,229)"/><circle cx="1253.5" cy="452.1" r="1.2" fill="rgb(255,255,255)"/><circle cx="1259.9" cy="453.9" r="1.0" fill="rgb(231,231,231)"/><circle cx="1266.7" cy="453.5" r="0.9" fill="rgb(245,245,245)"/><circle cx="1275.5" cy="455.2" r="0.8" fill="rgb(236,236,236)"/><circle cx="1279.0" cy="455.9" r="0.7" fill="rgb(250,250,250)"/><circle cx="1143.0" cy="469.9" r="1.4" fill="rgb(213,213,213)"/><circle cx="1149.7" cy="471.9" r="1.4" fill="rgb(246,246,246)"/><circle cx="1157.5" cy="472.1" r="0.9" fill="rgb(225,225,225)"/><circle cx="1161.2" cy="475.7" r="1.1" fill="rgb(243,243,243)"/><circle cx="1169.9" cy="475.4" r="1.2" fill="rgb(233,233,233)"/><circle cx="1181.2" cy="479.6" r="1.0" fill="rgb(210,210,210)"/><circle cx="1185.3" cy="480.2" r="1.1" fill="rgb(230,230,230)"/><circle cx="1193.9" cy="482.1" r="0.8" fill="rgb(242,242,242)"/><circle cx="1201.5" cy="483.7" r="1.0" fill="rgb(218,218,218)"/><circle cx="1208.6" cy="485.2" r="1.0" fill="rgb(250,250,250)"/><circle cx="1215.0" cy="485.6" r="0.9" fill="rgb(227,227,227)"/><circle cx="1222.4" cy="488.4" r="1.3" fill="rgb(222,222,222)"/><circle cx="1227.8" cy="488.7" r="1.0" fill="rgb(240,240,240)"/><circle cx="1236.4" cy="489.2" r="0.9" fill="rgb(224,224,224)"/><circle cx="1243.4" cy="493.0" r="1.2" fill="rgb(208,208,208)"/><circle cx="1250.6" cy="494.0" r="1.2" fill="rgb(213,213,213)"/><circle cx="1260.0" cy="494.8" r="0.8" fill="rgb(209,209,209)"/><circle cx="1265.6" cy="496.9" r="1.2" fill="rgb(213,213,213)"/><circle cx="1274.8" cy="497.7" r="1.3" fill="rgb(238,238,238)"/><circle cx="1280.2" cy="501.5" r="1.1" fill="rgb(240,240,240)"/><circle cx="1150.1" cy="520.3" r="1.1" fill="rgb(247,247,247)"/><circle cx="1159.2" cy="516.2" r="0.8" fill="rgb(226,226,226)"/><circle cx="1163.4" cy="515.5" r="0.7" fill="rgb(229,229,229)"/><circle cx="1174.8" cy="511.8" r="0.8" fill="rgb(238,238,238)"/><circle cx="1180.2" cy="511.3" r="1.0" fill="rgb(236,236,236)"/><circle cx="1187.6" cy="508.1" r="1.0" fill="rgb(243,243,243)"/><circle cx="1195.0" cy="506.7" r="0.7" fill="rgb(239,239,239)"/><circle cx="1202.8" cy="505.5" r="1.3" fill="rgb(206,206,206)"/><circle cx="1211.2" cy="502.4" r="0.7" fill="rgb(245,245,245)"/><circle cx="1217.4" cy="497.7" r="1.2" fill="rgb(221,221,221)"/><circle cx="1226.5" cy="497.3" r="0.8" fill="rgb(227,227,227)"/><circle cx="1232.9" cy="492.9" r="0.9" fill="rgb(222,222,222)"/><circle cx="1242.5" cy="491.5" r="0.9" fill="rgb(232,232,232)"/><circle cx="1248.0" cy="489.5" r="0.8" fill="rgb(212,212,212)"/><circle cx="1255.9" cy="487.5" r="1.1" fill="rgb(250,250,250)"/><circle cx="1265.9" cy="484.4" r="1.0" fill="rgb(236,236,236)"/><circle cx="1270.4" cy="481.3" r="0.8" fill="rgb(230,230,230)"/><circle cx="1280.8" cy="480.8" r="1.3" fill="rgb(239,239,239)"/><circle cx="1158.6" cy="560.7" r="1.2" fill="rgb(243,243,243)"/><circle cx="1164.5" cy="558.2" r="1.1" fill="rgb(211,211,211)"/><circle cx="1172.0" cy="553.7" r="1.2" fill="rgb(241,241,241)"/><circle cx="1180.9" cy="551.5" r="0.9" fill="rgb(245,245,245)"/><circle cx="1187.0" cy="549.4" r="0.9" fill="rgb(227,227,227)"/><circle cx="1195.7" cy="547.9" r="1.0" fill="rgb(233,233,233)"/><circle cx="1199.9" cy="545.5" r="1.1" fill="rgb(225,225,225)"/><circle cx="1207.8" cy="541.2" r="1.1" fill="rgb(242,242,242)"/><circle cx="1217.8" cy="538.1" r="0.8" fill="rgb(241,241,241)"/><circle cx="1224.6" cy="536.6" r="1.0" fill="rgb(200,200,200)"/><circle cx="1230.0" cy="534.7" r="0.8" fill="rgb(255,255,255)"/><circle cx="1236.5" cy="530.6" r="1.1" fill="rgb(228,228,228)"/><circle cx="1244.4" cy="526.6" r="1.2" fill="rgb(245,245,245)"/><circle cx="1251.2" cy="526.2" r="0.9" fill="rgb(235,235,235)"/><circle cx="1259.3" cy="524.0" r="0.9" fill="rgb(203,203,203)"/><circle cx="1265.0" cy="518.6" r="1.2" fill="rgb(252,252,252)"/><circle cx="1272.9" cy="517.0" r="1.1" fill="rgb(255,255,255)"/><circle cx="1281.3" cy="514.1" r="1.4" fill="rgb(246,246,246)"/><circle cx="1200.4" cy="548.8" r="1.3" fill="rgb(223,223,223)"/><circle cx="1207.6" cy="556.3" r="1.0" fill="rgb(249,249,249)"/><circle cx="1216.7" cy="560.5" r="1.1" fill="rgb(218,218,218)"/><circle cx="1221.5" cy="563.7" r="1.3" fill="rgb(238,238,238)"/><circle cx="1228.9" cy="569.3" r="1.3" fill="rgb(238,238,238)"/><circle cx="1237.6" cy="574.8" r="0.9" fill="rgb(224,224,224)"/><circle cx="1244.5" cy="578.8" r="1.3" fill="rgb(218,218,218)"/><circle cx="1250.9" cy="581.5" r="0.8" fill="rgb(252,252,252)"/><circle cx="1259.8" cy="586.2" r="0.8" fill="rgb(255,255,255)"/><circle cx="1265.8" cy="593.2" r="1.3" fill="rgb(235,235,235)"/><circle cx="1274.5" cy="595.3" r="0.8" fill="rgb(235,235,235)"/><circle cx="1279.6" cy="600.8" r="1.2" fill="rgb(214,214,214)"/><circle cx="1143.2" cy="599.4" r="1.2" fill="rgb(216,216,216)"/><circle cx="1150.3" cy="604.0" r="1.1" fill="rgb(234,234,234)"/><circle cx="1159.7" cy="608.2" r="1.1" fill="rgb(216,216,216)"/><circle cx="1165.7" cy="613.3" r="1.1" fill="rgb(212,212,212)"/><circle cx="1169.2" cy="617.4" r="0.9" fill="rgb(236,236,236)"/><circle cx="1177.6" cy="621.3" r="0.8" fill="rgb(202,202,202)"/><circle cx="1185.3" cy="627.2" r="1.0" fill="rgb(229,229,229)"/><circle cx="1190.5" cy="630.4" r="0.9" fill="rgb(233,233,233)"/><circle cx="1196.4" cy="633.1" r="1.3" fill="rgb(236,236,236)"/><circle cx="1204.0" cy="637.3" r="1.2" fill="rgb(227,227,227)"/><circle cx="1209.2" cy="641.9" r="1.1" fill="rgb(208,208,208)"/><circle cx="1214.9" cy="645.2" r="0.8" fill="rgb(205,205,205)"/><circle cx="1220.8" cy="649.6" r="1.2" fill="rgb(231,231,231)"/><circle cx="1232.4" cy="654.4" r="1.1" fill="rgb(225,225,225)"/><circle cx="1162.0" cy="638.0" r="0.9" fill="rgb(214,214,214)"/><circle cx="1169.8" cy="635.6" r="1.0" fill="rgb(228,228,228)"/><circle cx="1176.7" cy="629.2" r="1.2" fill="rgb(211,211,211)"/><circle cx="1181.8" cy="626.4" r="1.3" fill="rgb(201,201,201)"/><circle cx="1191.7" cy="621.6" r="1.2" fill="rgb(241,241,241)"/><circle cx="1200.8" cy="615.0" r="0.9" fill="rgb(200,200,200)"/><circle cx="1209.9" cy="610.6" r="1.1" fill="rgb(248,248,248)"/><circle cx="1216.4" cy="606.7" r="1.0" fill="rgb(223,223,223)"/><circle cx="1222.9" cy="601.9" r="0.8" fill="rgb(243,243,243)"/><circle cx="1233.2" cy="598.5" r="1.3" fill="rgb(210,210,210)"/><circle cx="1240.5" cy="593.8" r="1.3" fill="rgb(247,247,247)"/><circle cx="1246.7" cy="588.1" r="1.4" fill="rgb(253,253,253)"/><circle cx="1253.2" cy="586.3" r="0.9" fill="rgb(214,214,214)"/><circle cx="1264.3" cy="578.3" r="0.9" fill="rgb(203,203,203)"/><circle cx="1270.8" cy="576.4" r="1.0" fill="rgb(209,209,209)"/><circle cx="1279.0" cy="569.4" r="0.9" fill="rgb(253,253,253)"/><circle cx="1240.4" cy="428.8" r="0.8" fill="rgb(229,229,229)"/><circle cx="1245.5" cy="438.1" r="0.7" fill="rgb(250,250,250)"/><circle cx="1250.9" cy="441.7" r="0.9" fill="rgb(216,216,216)"/><circle cx="1259.1" cy="447.5" r="0.9" fill="rgb(215,215,215)"/><circle cx="1262.6" cy="453.2" r="1.3" fill="rgb(203,203,203)"/><circle cx="1270.8" cy="458.3" r="1.1" fill="rgb(228,228,228)"/><circle cx="1274.5" cy="463.9" r="0.7" fill="rgb(253,253,253)"/><circle cx="1280.4" cy="470.6" r="0.7" fill="rgb(226,226,226)"/><circle cx="28.8" cy="528.0" r="0.6" fill="rgb(193,193,193)"/><circle cx="68.9" cy="470.7" r="0.7" fill="rgb(246,246,246)"/><circle cx="10.5" cy="446.7" r="1.0" fill="rgb(233,233,233)"/><circle cx="100.5" cy="461.5" r="0.6" fill="rgb(255,255,255)"/><circle cx="93.4" cy="568.3" r="1.0" fill="rgb(195,195,195)"/><circle cx="1.3" cy="548.3" r="1.0" fill="rgb(177,177,177)"/><circle cx="68.4" cy="490.4" r="0.8" fill="rgb(251,251,251)"/><circle cx="114.1" cy="514.8" r="0.5" fill="rgb(231,231,231)"/><circle cx="17.6" cy="543.8" r="0.7" fill="rgb(242,242,242)"/><circle cx="109.8" cy="493.7" r="0.6" fill="rgb(217,217,217)"/><circle cx="75.9" cy="576.2" r="0.8" fill="rgb(227,227,227)"/><circle cx="127.9" cy="444.0" r="0.8" fill="rgb(201,201,201)"/><circle cx="107.8" cy="577.4" r="0.8" fill="rgb(218,218,218)"/><circle cx="76.1" cy="582.9" r="0.8" fill="rgb(183,183,183)"/><circle cx="125.9" cy="515.1" r="1.0" fill="rgb(237,237,237)"/><circle cx="106.2" cy="454.6" r="0.7" fill="rgb(181,181,181)"/><circle cx="29.5" cy="462.6" r="0.6" fill="rgb(202,202,202)"/><circle cx="73.3" cy="592.5" r="0.5" fill="rgb(194,194,194)"/><circle cx="34.5" cy="572.7" r="1.1" fill="rgb(229,229,229)"/><circle cx="69.0" cy="550.0" r="0.6" fill="rgb(182,182,182)"/><circle cx="94.7" cy="439.6" r="0.6" fill="rgb(233,233,233)"/><circle cx="77.3" cy="559.9" r="0.6" fill="rgb(185,185,185)"/><circle cx="53.5" cy="455.0" r="1.0" fill="rgb(199,199,199)"/><circle cx="19.4" cy="528.2" r="1.2" fill="rgb(191,191,191)"/><circle cx="125.2" cy="435.1" r="1.1" fill="rgb(223,223,223)"/><circle cx="78.8" cy="533.3" r="0.5" fill="rgb(176,176,176)"/><circle cx="102.6" cy="488.9" r="0.7" fill="rgb(212,212,212)"/><circle cx="94.4" cy="573.6" r="1.0" fill="rgb(211,211,211)"/><circle cx="107.6" cy="574.4" r="0.5" fill="rgb(236,236,236)"/><circle cx="19.4" cy="546.3" r="0.8" fill="rgb(224,224,224)"/><circle cx="87.5" cy="433.9" r="0.6" fill="rgb(193,193,193)"/><circle cx="9.1" cy="504.8" r="1.0" fill="rgb(172,172,172)"/><circle cx="29.8" cy="502.7" r="0.9" fill="rgb(228,228,228)"/><circle cx="83.6" cy="568.0" r="1.3" fill="rgb(175,175,175)"/><circle cx="4.5" cy="539.8" r="0.7" fill="rgb(249,249,249)"/><circle cx="36.1" cy="523.1" r="1.3" fill="rgb(249,249,249)"/><circle cx="13.3" cy="452.4" r="0.5" fill="rgb(200,200,200)"/><circle cx="125.5" cy="480.3" r="0.8" fill="rgb(252,252,252)"/><circle cx="22.0" cy="442.1" r="1.4" fill="rgb(235,235,235)"/><circle cx="119.0" cy="446.2" r="1.0" fill="rgb(188,188,188)"/><circle cx="58.1" cy="518.0" r="1.3" fill="rgb(222,222,222)"/><circle cx="76.2" cy="478.1" r="1.2" fill="rgb(239,239,239)"/><circle cx="37.9" cy="508.3" r="1.1" fill="rgb(198,198,198)"/><circle cx="85.8" cy="465.8" r="1.1" fill="rgb(228,228,228)"/><circle cx="117.7" cy="483.0" r="0.9" fill="rgb(209,209,209)"/><circle cx="4.1" cy="488.1" r="0.7" fill="rgb(239,239,239)"/><circle cx="50.6" cy="530.4" r="0.5" fill="rgb(215,215,215)"/><circle cx="21.4" cy="591.9" r="0.8" fill="rgb(211,211,211)"/><circle cx="64.9" cy="479.8" r="1.4" fill="rgb(207,207,207)"/><circle cx="7.5" cy="435.7" r="1.0" fill="rgb(247,247,247)"/><circle cx="115.0" cy="505.9" r="0.6" fill="rgb(219,219,219)"/><circle cx="110.1" cy="491.5" r="1.2" fill="rgb(236,236,236)"/><circle cx="29.7" cy="593.2" r="1.2" fill="rgb(189,189,189)"/><circle cx="55.0" cy="544.3" r="0.6" fill="rgb(195,195,195)"/><circle cx="81.4" cy="574.8" r="1.2" fill="rgb(236,236,236)"/><circle cx="12.5" cy="575.9" r="1.3" fill="rgb(230,230,230)"/><circle cx="35.5" cy="538.0" r="1.1" fill="rgb(186,186,186)"/><circle cx="54.5" cy="449.4" r="0.9" fill="rgb(240,240,240)"/><circle cx="77.3" cy="515.6" r="1.4" fill="rgb(243,243,243)"/><circle cx="19.8" cy="574.8" r="0.8" fill="rgb(249,249,249)"/><circle cx="80.2" cy="495.8" r="0.9" fill="rgb(228,228,228)"/><circle cx="38.0" cy="491.2" r="0.8" fill="rgb(237,237,237)"/><circle cx="73.3" cy="496.6" r="0.8" fill="rgb(233,233,233)"/><circle cx="50.2" cy="482.4" r="1.0" fill="rgb(188,188,188)"/><circle cx="57.5" cy="495.3" r="0.7" fill="rgb(212,212,212)"/><circle cx="42.8" cy="573.7" r="1.3" fill="rgb(211,211,211)"/><circle cx="27.0" cy="503.6" r="1.3" fill="rgb(171,171,171)"/><circle cx="3.4" cy="475.1" r="1.3" fill="rgb(208,208,208)"/><circle cx="121.5" cy="561.9" r="1.0" fill="rgb(225,225,225)"/><circle cx="68.3" cy="518.9" r="1.1" fill="rgb(219,219,219)"/><circle cx="61.3" cy="438.8" r="1.1" fill="rgb(227,227,227)"/><circle cx="125.1" cy="545.6" r="1.0" fill="rgb(182,182,182)"/><circle cx="54.1" cy="516.2" r="1.1" fill="rgb(243,243,243)"/><circle cx="20.4" cy="463.6" r="0.9" fill="rgb(221,221,221)"/><circle cx="58.1" cy="536.9" r="1.4" fill="rgb(213,213,213)"/><circle cx="91.3" cy="557.4" r="0.6" fill="rgb(216,216,216)"/><circle cx="42.0" cy="596.4" r="1.2" fill="rgb(235,235,235)"/><circle cx="23.2" cy="542.2" r="0.8" fill="rgb(213,213,213)"/><circle cx="108.3" cy="598.4" r="1.3" fill="rgb(223,223,223)"/><circle cx="83.3" cy="520.0" r="1.2" fill="rgb(196,196,196)"/><circle cx="66.6" cy="463.6" r="0.7" fill="rgb(250,250,250)"/><circle cx="74.6" cy="449.9" r="1.0" fill="rgb(250,250,250)"/><circle cx="84.0" cy="439.1" r="0.9" fill="rgb(170,170,170)"/><circle cx="40.5" cy="548.0" r="0.5" fill="rgb(208,208,208)"/><circle cx="52.5" cy="448.5" r="0.5" fill="rgb(173,173,173)"/><circle cx="26.0" cy="515.6" r="1.0" fill="rgb(204,204,204)"/><circle cx="115.0" cy="582.5" r="1.0" fill="rgb(188,188,188)"/><circle cx="75.8" cy="501.1" r="0.6" fill="rgb(190,190,190)"/><circle cx="68.4" cy="517.6" r="0.5" fill="rgb(179,179,179)"/><circle cx="22.5" cy="519.8" r="1.2" fill="rgb(248,248,248)"/><circle cx="56.8" cy="566.5" r="1.1" fill="rgb(244,244,244)"/><circle cx="42.6" cy="552.2" r="0.8" fill="rgb(191,191,191)"/><circle cx="4.3" cy="537.6" r="1.3" fill="rgb(244,244,244)"/><circle cx="8.3" cy="464.2" r="1.1" fill="rgb(172,172,172)"/><circle cx="7.2" cy="581.6" r="1.0" fill="rgb(175,175,175)"/><circle cx="58.0" cy="536.2" r="0.7" fill="rgb(175,175,175)"/><circle cx="21.0" cy="530.6" r="0.7" fill="rgb(170,170,170)"/><circle cx="118.7" cy="569.1" r="0.8" fill="rgb(247,247,247)"/><circle cx="33.3" cy="581.0" r="1.4" fill="rgb(178,178,178)"/><circle cx="32.1" cy="497.5" r="1.1" fill="rgb(198,198,198)"/><circle cx="54.6" cy="499.0" r="1.1" fill="rgb(172,172,172)"/><circle cx="104.6" cy="472.9" r="0.7" fill="rgb(215,215,215)"/><circle cx="50.0" cy="433.3" r="1.3" fill="rgb(220,220,220)"/><circle cx="74.1" cy="451.3" r="1.0" fill="rgb(219,219,219)"/><circle cx="44.3" cy="541.4" r="1.4" fill="rgb(224,224,224)"/><circle cx="109.0" cy="491.0" r="0.7" fill="rgb(194,194,194)"/><circle cx="61.6" cy="489.9" r="0.9" fill="rgb(205,205,205)"/><circle cx="87.7" cy="489.4" r="0.6" fill="rgb(186,186,186)"/><circle cx="12.2" cy="477.3" r="1.3" fill="rgb(186,186,186)"/><circle cx="73.3" cy="510.5" r="1.2" fill="rgb(200,200,200)"/><circle cx="95.0" cy="501.2" r="1.3" fill="rgb(244,244,244)"/><circle cx="115.7" cy="514.8" r="0.8" fill="rgb(250,250,250)"/><circle cx="110.2" cy="493.6" r="1.0" fill="rgb(228,228,228)"/><circle cx="129.5" cy="539.9" r="1.2" fill="rgb(248,248,248)"/><circle cx="113.9" cy="502.1" r="0.8" fill="rgb(252,252,252)"/><circle cx="97.4" cy="532.3" r="0.6" fill="rgb(252,252,252)"/><circle cx="92.0" cy="531.1" r="1.3" fill="rgb(244,244,244)"/><circle cx="89.3" cy="523.1" r="0.7" fill="rgb(220,220,220)"/><circle cx="105.2" cy="485.2" r="0.7" fill="rgb(234,234,234)"/><circle cx="102.1" cy="519.8" r="0.6" fill="rgb(255,255,255)"/><circle cx="128.2" cy="528.3" r="1.3" fill="rgb(232,232,232)"/><circle cx="90.9" cy="498.7" r="0.7" fill="rgb(228,228,228)"/><circle cx="123.9" cy="503.9" r="0.9" fill="rgb(249,249,249)"/><circle cx="122.1" cy="533.0" r="1.4" fill="rgb(228,228,228)"/><circle cx="129.2" cy="490.6" r="0.9" fill="rgb(242,242,242)"/><circle cx="127.5" cy="481.5" r="1.3" fill="rgb(249,249,249)"/><circle cx="98.9" cy="530.8" r="0.9" fill="rgb(226,226,226)"/><circle cx="96.0" cy="486.9" r="1.5" fill="rgb(234,234,234)"/><circle cx="119.4" cy="482.4" r="0.5" fill="rgb(230,230,230)"/><circle cx="107.0" cy="525.4" r="0.7" fill="rgb(222,222,222)"/><circle cx="112.3" cy="517.8" r="1.5" fill="rgb(234,234,234)"/><circle cx="113.1" cy="523.0" r="0.8" fill="rgb(247,247,247)"/><circle cx="117.5" cy="514.5" r="1.5" fill="rgb(227,227,227)"/><circle cx="124.7" cy="526.6" r="0.8" fill="rgb(222,222,222)"/><circle cx="126.5" cy="515.1" r="1.3" fill="rgb(235,235,235)"/><circle cx="118.0" cy="482.2" r="0.9" fill="rgb(242,242,242)"/><circle cx="121.0" cy="485.2" r="1.3" fill="rgb(245,245,245)"/><circle cx="131.9" cy="516.9" r="0.7" fill="rgb(253,253,253)"/><circle cx="92.0" cy="536.8" r="1.0" fill="rgb(241,241,241)"/><circle cx="118.4" cy="524.3" r="1.4" fill="rgb(248,248,248)"/><circle cx="110.4" cy="520.6" r="0.7" fill="rgb(252,252,252)"/><circle cx="125.2" cy="526.7" r="1.0" fill="rgb(232,232,232)"/><circle cx="89.9" cy="522.2" r="1.4" fill="rgb(236,236,236)"/><circle cx="95.7" cy="489.8" r="1.4" fill="rgb(235,235,235)"/><circle cx="111.9" cy="495.0" r="0.6" fill="rgb(242,242,242)"/><circle cx="103.3" cy="485.6" r="1.2" fill="rgb(228,228,228)"/><circle cx="94.0" cy="522.4" r="1.2" fill="rgb(235,235,235)"/><circle cx="119.0" cy="480.4" r="1.3" fill="rgb(228,228,228)"/><circle cx="129.2" cy="501.1" r="0.8" fill="rgb(229,229,229)"/><circle cx="113.9" cy="494.4" r="1.2" fill="rgb(227,227,227)"/><circle cx="72.4" cy="720.2" r="0.6" fill="rgb(195,195,195)"/><circle cx="20.4" cy="754.7" r="1.0" fill="rgb(161,161,161)"/><circle cx="109.7" cy="618.1" r="0.7" fill="rgb(156,156,156)"/><circle cx="64.2" cy="606.9" r="1.0" fill="rgb(148,148,148)"/><circle cx="26.0" cy="710.9" r="0.8" fill="rgb(124,124,124)"/><circle cx="21.3" cy="670.3" r="0.8" fill="rgb(147,147,147)"/><circle cx="22.2" cy="611.3" r="0.5" fill="rgb(206,206,206)"/><circle cx="64.1" cy="718.1" r="0.7" fill="rgb(204,204,204)"/><circle cx="74.4" cy="617.2" r="0.8" fill="rgb(165,165,165)"/><circle cx="64.5" cy="723.9" r="0.7" fill="rgb(155,155,155)"/><circle cx="121.4" cy="701.8" r="0.9" fill="rgb(203,203,203)"/><circle cx="86.1" cy="639.7" r="0.6" fill="rgb(127,127,127)"/><circle cx="98.7" cy="604.0" r="0.7" fill="rgb(128,128,128)"/><circle cx="39.1" cy="629.3" r="0.9" fill="rgb(218,218,218)"/><circle cx="118.2" cy="707.8" r="0.6" fill="rgb(202,202,202)"/><circle cx="109.6" cy="717.3" r="0.7" fill="rgb(133,133,133)"/><circle cx="85.4" cy="656.3" r="0.6" fill="rgb(127,127,127)"/><circle cx="72.7" cy="658.3" r="1.0" fill="rgb(140,140,140)"/><circle cx="7.6" cy="616.9" r="1.0" fill="rgb(214,214,214)"/><circle cx="132.0" cy="663.7" r="0.5" fill="rgb(137,137,137)"/><circle cx="65.3" cy="678.9" r="0.6" fill="rgb(148,148,148)"/><circle cx="79.5" cy="699.0" r="0.6" fill="rgb(139,139,139)"/><circle cx="21.6" cy="670.0" r="1.1" fill="rgb(121,121,121)"/><circle cx="129.2" cy="734.4" r="0.8" fill="rgb(137,137,137)"/><circle cx="95.4" cy="600.4" r="1.0" fill="rgb(219,219,219)"/><circle cx="110.0" cy="680.8" r="0.6" fill="rgb(119,119,119)"/><circle cx="87.3" cy="681.3" r="0.8" fill="rgb(153,153,153)"/><circle cx="8.3" cy="601.4" r="1.1" fill="rgb(132,132,132)"/><circle cx="119.3" cy="626.0" r="0.7" fill="rgb(166,166,166)"/><circle cx="106.1" cy="706.7" r="0.8" fill="rgb(170,170,170)"/><circle cx="11.2" cy="651.1" r="0.8" fill="rgb(178,178,178)"/><circle cx="119.9" cy="736.7" r="1.1" fill="rgb(187,187,187)"/><circle cx="81.8" cy="728.2" r="0.5" fill="rgb(196,196,196)"/><circle cx="43.8" cy="704.0" r="0.8" fill="rgb(163,163,163)"/><circle cx="125.8" cy="676.0" r="0.9" fill="rgb(148,148,148)"/><circle cx="114.2" cy="683.8" r="0.9" fill="rgb(218,218,218)"/><circle cx="24.9" cy="707.2" r="0.8" fill="rgb(120,120,120)"/><circle cx="19.4" cy="691.5" r="0.8" fill="rgb(163,163,163)"/><circle cx="47.5" cy="638.0" r="0.8" fill="rgb(143,143,143)"/><circle cx="15.1" cy="628.5" r="1.0" fill="rgb(180,180,180)"/><circle cx="0.0" cy="445.9" r="1.2" fill="rgb(212,212,212)"/><circle cx="7.9" cy="443.7" r="1.1" fill="rgb(214,214,214)"/><circle cx="17.9" cy="443.1" r="1.3" fill="rgb(236,236,236)"/><circle cx="24.0" cy="440.1" r="1.0" fill="rgb(255,255,255)"/><circle cx="34.3" cy="440.9" r="1.4" fill="rgb(240,240,240)"/><circle cx="45.2" cy="437.1" r="1.3" fill="rgb(225,225,225)"/><circle cx="53.0" cy="436.3" r="1.0" fill="rgb(205,205,205)"/><circle cx="59.6" cy="434.9" r="0.9" fill="rgb(223,223,223)"/><circle cx="-0.7" cy="470.6" r="1.0" fill="rgb(207,207,207)"/><circle cx="7.5" cy="475.8" r="1.1" fill="rgb(255,255,255)"/><circle cx="12.3" cy="478.7" r="0.9" fill="rgb(223,223,223)"/><circle cx="21.7" cy="484.1" r="1.2" fill="rgb(252,252,252)"/><circle cx="27.1" cy="486.8" r="1.1" fill="rgb(222,222,222)"/><circle cx="35.0" cy="492.1" r="0.8" fill="rgb(235,235,235)"/><circle cx="42.7" cy="494.0" r="1.3" fill="rgb(215,215,215)"/><circle cx="48.4" cy="499.4" r="1.3" fill="rgb(237,237,237)"/><circle cx="60.7" cy="559.9" r="0.8" fill="rgb(216,216,216)"/><circle cx="67.2" cy="563.3" r="1.2" fill="rgb(224,224,224)"/><circle cx="77.3" cy="568.7" r="1.4" fill="rgb(248,248,248)"/><circle cx="86.3" cy="572.4" r="0.9" fill="rgb(209,209,209)"/><circle cx="91.9" cy="576.3" r="1.3" fill="rgb(204,204,204)"/><circle cx="99.9" cy="582.2" r="1.0" fill="rgb(230,230,230)"/><circle cx="110.1" cy="587.3" r="0.9" fill="rgb(239,239,239)"/><circle cx="115.6" cy="591.2" r="0.9" fill="rgb(208,208,208)"/><circle cx="122.9" cy="594.7" r="1.0" fill="rgb(229,229,229)"/><circle cx="131.4" cy="601.0" r="0.9" fill="rgb(221,221,221)"/><circle cx="9.7" cy="638.5" r="1.0" fill="rgb(238,238,238)"/><circle cx="14.8" cy="638.4" r="0.9" fill="rgb(217,217,217)"/><circle cx="24.5" cy="634.9" r="1.1" fill="rgb(237,237,237)"/><circle cx="34.2" cy="630.4" r="1.1" fill="rgb(249,249,249)"/><circle cx="36.5" cy="629.9" r="1.1" fill="rgb(206,206,206)"/><circle cx="44.7" cy="628.2" r="1.3" fill="rgb(209,209,209)"/><circle cx="52.8" cy="625.2" r="1.2" fill="rgb(232,232,232)"/><circle cx="60.2" cy="622.8" r="1.2" fill="rgb(221,221,221)"/><circle cx="17.8" cy="660.0" r="1.4" fill="rgb(230,230,230)"/><circle cx="31.2" cy="657.9" r="1.4" fill="rgb(209,209,209)"/><circle cx="37.1" cy="655.6" r="1.0" fill="rgb(228,228,228)"/><circle cx="50.4" cy="652.4" r="1.1" fill="rgb(209,209,209)"/><circle cx="58.6" cy="648.9" r="1.1" fill="rgb(221,221,221)"/><circle cx="67.4" cy="646.8" r="1.1" fill="rgb(219,219,219)"/><circle cx="743.0" cy="760.9" r="0.6" fill="rgb(178,178,178)"/><circle cx="548.2" cy="760.1" r="0.5" fill="rgb(152,152,152)"/><circle cx="408.6" cy="755.2" r="0.9" fill="rgb(159,159,159)"/><circle cx="29.5" cy="755.2" r="0.6" fill="rgb(180,180,180)"/><circle cx="25.7" cy="754.3" r="0.7" fill="rgb(167,167,167)"/><circle cx="361.8" cy="757.5" r="0.5" fill="rgb(120,120,120)"/><circle cx="939.4" cy="760.7" r="0.7" fill="rgb(100,100,100)"/><circle cx="94.0" cy="759.7" r="0.7" fill="rgb(107,107,107)"/><circle cx="6.5" cy="755.9" r="0.8" fill="rgb(91,91,91)"/><circle cx="819.1" cy="760.5" r="0.6" fill="rgb(131,131,131)"/><circle cx="1110.7" cy="754.2" r="0.7" fill="rgb(168,168,168)"/><circle cx="869.1" cy="756.4" r="0.5" fill="rgb(143,143,143)"/><circle cx="1019.2" cy="754.6" r="0.7" fill="rgb(153,153,153)"/><circle cx="1264.4" cy="756.8" r="0.9" fill="rgb(91,91,91)"/><circle cx="32.9" cy="756.2" r="0.8" fill="rgb(130,130,130)"/><circle cx="71.7" cy="758.3" r="0.8" fill="rgb(132,132,132)"/><circle cx="200.5" cy="754.1" r="0.6" fill="rgb(157,157,157)"/><circle cx="982.0" cy="754.6" r="0.8" fill="rgb(144,144,144)"/><circle cx="440.5" cy="758.8" r="0.8" fill="rgb(109,109,109)"/><circle cx="841.4" cy="758.2" r="0.6" fill="rgb(169,169,169)"/><circle cx="330.0" cy="759.0" r="0.8" fill="rgb(172,172,172)"/><circle cx="395.8" cy="759.4" r="0.9" fill="rgb(148,148,148)"/><circle cx="715.9" cy="756.5" r="0.7" fill="rgb(125,125,125)"/><circle cx="168.8" cy="754.1" r="0.7" fill="rgb(173,173,173)"/><circle cx="1035.8" cy="760.8" r="0.6" fill="rgb(170,170,170)"/><circle cx="292.1" cy="759.3" r="0.5" fill="rgb(93,93,93)"/><circle cx="799.5" cy="754.9" r="0.7" fill="rgb(116,116,116)"/><circle cx="710.7" cy="755.3" r="0.9" fill="rgb(136,136,136)"/><circle cx="944.1" cy="760.3" r="0.8" fill="rgb(110,110,110)"/><circle cx="676.5" cy="756.5" r="0.8" fill="rgb(146,146,146)"/><circle cx="1257.4" cy="757.5" r="0.8" fill="rgb(134,134,134)"/><circle cx="1153.3" cy="756.7" r="0.6" fill="rgb(93,93,93)"/><circle cx="138.0" cy="759.1" r="0.5" fill="rgb(172,172,172)"/><circle cx="1169.5" cy="758.7" r="0.6" fill="rgb(119,119,119)"/><circle cx="722.2" cy="756.9" r="0.9" fill="rgb(174,174,174)"/><circle cx="802.7" cy="755.6" r="0.6" fill="rgb(123,123,123)"/><circle cx="907.9" cy="755.7" r="0.6" fill="rgb(131,131,131)"/><circle cx="971.7" cy="758.5" r="0.6" fill="rgb(153,153,153)"/><circle cx="277.3" cy="758.0" r="0.6" fill="rgb(124,124,124)"/><circle cx="1221.5" cy="755.0" r="0.6" fill="rgb(101,101,101)"/><circle cx="424.4" cy="757.4" r="0.9" fill="rgb(110,110,110)"/><circle cx="409.3" cy="758.3" r="0.9" fill="rgb(117,117,117)"/><circle cx="741.4" cy="760.2" r="0.6" fill="rgb(136,136,136)"/><circle cx="59.1" cy="759.4" r="0.7" fill="rgb(145,145,145)"/><circle cx="1105.9" cy="761.0" r="0.6" fill="rgb(93,93,93)"/><circle cx="1030.4" cy="755.1" r="0.9" fill="rgb(107,107,107)"/><circle cx="1166.9" cy="755.1" r="0.8" fill="rgb(102,102,102)"/><circle cx="961.7" cy="757.3" r="0.7" fill="rgb(143,143,143)"/><circle cx="434.6" cy="760.4" r="0.8" fill="rgb(132,132,132)"/><circle cx="1254.0" cy="754.2" r="0.6" fill="rgb(170,170,170)"/><circle cx="882.5" cy="754.3" r="0.7" fill="rgb(119,119,119)"/><circle cx="735.8" cy="758.9" r="0.8" fill="rgb(96,96,96)"/><circle cx="1268.2" cy="756.2" r="0.9" fill="rgb(105,105,105)"/><circle cx="1225.2" cy="760.8" r="0.7" fill="rgb(90,90,90)"/><circle cx="229.1" cy="758.8" r="0.6" fill="rgb(159,159,159)"/><circle cx="640.9" cy="754.8" r="0.6" fill="rgb(153,153,153)"/><circle cx="1225.3" cy="754.5" r="0.9" fill="rgb(118,118,118)"/><circle cx="936.2" cy="755.9" r="0.6" fill="rgb(123,123,123)"/><circle cx="344.3" cy="760.8" r="0.6" fill="rgb(96,96,96)"/><circle cx="522.4" cy="757.9" r="0.6" fill="rgb(91,91,91)"/></g></svg>
<svg class="abs" style="left:1221px;top:7px;overflow:visible" width="32" height="32" viewBox="0 0 32 32"><defs><linearGradient id="gs" x1="0" y1="0" x2="0" y2="1"><stop offset="0" stop-color="#0a86d8"/><stop offset=".45" stop-color="#0350b0"/><stop offset="1" stop-color="#010a66"/></linearGradient></defs><rect x="0" y="0" width="32" height="32" fill="url(#gs)"/><path d="M5 16.5 C7 12.5 9 10.5 11 10.5 C14.5 10.5 16 19 21 19 C25.5 19 27 12 32 9.5" fill="none" stroke="#39414b" stroke-width="1.4"/><path d="M15.5 15.5 C18 11 20 5.5 24 5.5 C27 5.5 29 9 31.5 13" fill="none" stroke="#39414b" stroke-width="1.4"/><g transform="translate(0.5,16.3)"><rect x="0" y="0" width="15" height="15" fill="#dfe6f8" stroke="#b4b6ba" stroke-width="1"/><rect x="1" y="1" width="13" height="13" fill="none" stroke="#fafbff" stroke-width="1"/><path d="M4.4 13 C2.6 8 5.4 4.6 9 4.8 L7.4 2.4 L13 2.4 L13 8.4 L11 6.8 C8.4 7.2 7.2 9.6 8.2 13Z" fill="#1c4f9e" stroke="#143a78" stroke-width=".4"/><path d="M8.4 13.6 C8.6 11.2 10.4 10 13.6 10.6 L13.6 13.6Z" fill="#f4f6ff" opacity=".9"/></g></svg>
<div class="t lbl" style="left:1209.0px;top:42.5px;font-size:12px;line-height:16px;color:#fff;letter-spacing:-0.87px;">SDRSharp -</div>
<div class="t lbl" style="left:1224.5px;top:56.5px;font-size:12px;line-height:16px;color:#fff;letter-spacing:-0.43px;">1489</div>
<svg class="abs" style="left:1221px;top:91px;overflow:visible" width="32" height="32" viewBox="0 0 32 32"><defs><linearGradient id="gs" x1="0" y1="0" x2="0" y2="1"><stop offset="0" stop-color="#0a86d8"/><stop offset=".45" stop-color="#0350b0"/><stop offset="1" stop-color="#010a66"/></linearGradient></defs><rect x="0" y="0" width="32" height="32" fill="url(#gs)"/><path d="M5 16.5 C7 12.5 9 10.5 11 10.5 C14.5 10.5 16 19 21 19 C25.5 19 27 12 32 9.5" fill="none" stroke="#39414b" stroke-width="1.4"/><path d="M15.5 15.5 C18 11 20 5.5 24 5.5 C27 5.5 29 9 31.5 13" fill="none" stroke="#39414b" stroke-width="1.4"/><g transform="translate(0.5,16.3)"><rect x="0" y="0" width="15" height="15" fill="#dfe6f8" stroke="#b4b6ba" stroke-width="1"/><rect x="1" y="1" width="13" height="13" fill="none" stroke="#fafbff" stroke-width="1"/><path d="M4.4 13 C2.6 8 5.4 4.6 9 4.8 L7.4 2.4 L13 2.4 L13 8.4 L11 6.8 C8.4 7.2 7.2 9.6 8.2 13Z" fill="#1c4f9e" stroke="#143a78" stroke-width=".4"/><path d="M8.4 13.6 C8.6 11.2 10.4 10 13.6 10.6 L13.6 13.6Z" fill="#f4f6ff" opacity=".9"/></g></svg>
<div class="t lbl" style="left:1209.0px;top:126.5px;font-size:12px;line-height:16px;color:#fff;letter-spacing:-0.87px;">SDRSharp -</div>
<div class="t lbl" style="left:1221.5px;top:140.5px;font-size:12px;line-height:16px;color:#fff;letter-spacing:-1.25px;">WSPR</div>
<svg class="abs" style="left:1221px;top:175px;overflow:visible" width="32" height="32" viewBox="0 0 32 32"><defs><linearGradient id="gs" x1="0" y1="0" x2="0" y2="1"><stop offset="0" stop-color="#0a86d8"/><stop offset=".45" stop-color="#0350b0"/><stop offset="1" stop-color="#010a66"/></linearGradient></defs><rect x="0" y="0" width="32" height="32" fill="url(#gs)"/><path d="M5 16.5 C7 12.5 9 10.5 11 10.5 C14.5 10.5 16 19 21 19 C25.5 19 27 12 32 9.5" fill="none" stroke="#39414b" stroke-width="1.4"/><path d="M15.5 15.5 C18 11 20 5.5 24 5.5 C27 5.5 29 9 31.5 13" fill="none" stroke="#39414b" stroke-width="1.4"/><g transform="translate(0.5,16.3)"><rect x="0" y="0" width="15" height="15" fill="#dfe6f8" stroke="#b4b6ba" stroke-width="1"/><rect x="1" y="1" width="13" height="13" fill="none" stroke="#fafbff" stroke-width="1"/><path d="M4.4 13 C2.6 8 5.4 4.6 9 4.8 L7.4 2.4 L13 2.4 L13 8.4 L11 6.8 C8.4 7.2 7.2 9.6 8.2 13Z" fill="#1c4f9e" stroke="#143a78" stroke-width=".4"/><path d="M8.4 13.6 C8.6 11.2 10.4 10 13.6 10.6 L13.6 13.6Z" fill="#f4f6ff" opacity=".9"/></g></svg>
<div class="t lbl" style="left:1202.0px;top:210.5px;font-size:12px;line-height:16px;color:#fff;letter-spacing:-0.67px;">SDRSharp - IF</div>
<div class="t lbl" style="left:1219.0px;top:224.5px;font-size:12px;line-height:16px;color:#fff;letter-spacing:-0.40px;">45MHz</div>
<svg class="abs" style="left:1221px;top:259px;overflow:visible" width="32" height="32" viewBox="0 0 32 32"><defs><radialGradient id="gg" cx=".58" cy=".6" r=".62"><stop offset="0" stop-color="#7088ff"/><stop offset=".55" stop-color="#3a48ff"/><stop offset="1" stop-color="#1a1cc8"/></radialGradient></defs><circle cx="16" cy="16" r="15.6" fill="url(#gg)"/><path d="M9 3.2 C11 1.4 14 0.6 17 0.5 C20 0.4 23 1.4 25 3 C27.4 5 29.6 8 30.8 11.5 C31.4 14 31.2 16.5 30.6 18 C29.6 17.6 28.8 16.4 28.2 14.6 C27.8 12.4 26.8 10.2 25.4 8.4 C24 6.6 22 5.2 19.6 4.6 C17.6 4.2 15.6 4 13.6 4.6 L12 5.4 L13.4 6.6 L16.4 6 L18.6 6.8 L21 8.8 L19.6 10 L18.2 9 L16.4 9.4 L18.4 11.6 L19.8 14.6 L18.8 16.6 L17.6 18.2 L16.4 16.8 L15 15.8 L12.4 16.2 L9.4 16 L8.6 12.6 L8 9 L9.6 7 L8.4 5.6Z" fill="#1ee83a"/><path d="M15.4 11 L16.6 10.6 L17.2 12.4 L16 12.8Z" fill="#3a48ff"/><path d="M16.8 25.6 C18.6 24.6 21.4 24.6 23.6 25 L26.6 25.6 C26 27.4 24.6 29 22.8 30 C21.2 30.9 19.6 31.3 18.4 31.2 C17.4 29.8 16.4 27.6 16.8 25.6Z" fill="#1ee83a"/><g transform="translate(0.5,16.3)"><rect x="0" y="0" width="15" height="15" fill="#dfe6f8" stroke="#b4b6ba" stroke-width="1"/><rect x="1" y="1" width="13" height="13" fill="none" stroke="#fafbff" stroke-width="1"/><path d="M4.4 13 C2.6 8 5.4 4.6 9 4.8 L7.4 2.4 L13 2.4 L13 8.4 L11 6.8 C8.4 7.2 7.2 9.6 8.2 13Z" fill="#1c4f9e" stroke="#143a78" stroke-width=".4"/><path d="M8.4 13.6 C8.6 11.2 10.4 10 13.6 10.6 L13.6 13.6Z" fill="#f4f6ff" opacity=".9"/></g></svg>
<div class="t lbl" style="left:1217.0px;top:294.5px;font-size:12px;line-height:16px;color:#fff;letter-spacing:-0.67px;">WSJT-X</div>
<svg class="abs" style="left:1221px;top:343px;overflow:visible" width="32" height="32" viewBox="0 0 32 32"><rect x="2" y="1" width="24" height="18" rx="2" fill="#e8ecf8" stroke="#8890b0"/><rect x="2" y="1" width="11" height="14" fill="#f4f6ff" stroke="#9098b8" stroke-width=".6"/><rect x="14" y="1" width="12" height="14" fill="#f4f6ff" stroke="#9098b8" stroke-width=".6"/><text x="4" y="13" font-size="12" font-weight="bold" fill="#1a2a9a" font-family="Liberation Sans, sans-serif">1</text><text x="17" y="13" font-size="12" font-weight="bold" fill="#1a2a9a" font-family="Liberation Sans, sans-serif">2</text><circle cx="23" cy="22" r="8.5" fill="#f4f4ff" stroke="#b08a50" stroke-width="1.4"/><path d="M23 22 L23 15 M23 22 L27 24" stroke="#c01818" stroke-width="1.2" fill="none"/><g transform="translate(0.5,16.3)"><rect x="0" y="0" width="15" height="15" fill="#dfe6f8" stroke="#b4b6ba" stroke-width="1"/><rect x="1" y="1" width="13" height="13" fill="none" stroke="#fafbff" stroke-width="1"/><path d="M4.4 13 C2.6 8 5.4 4.6 9 4.8 L7.4 2.4 L13 2.4 L13 8.4 L11 6.8 C8.4 7.2 7.2 9.6 8.2 13Z" fill="#1c4f9e" stroke="#143a78" stroke-width=".4"/><path d="M8.4 13.6 C8.6 11.2 10.4 10 13.6 10.6 L13.6 13.6Z" fill="#f4f6ff" opacity=".9"/></g></svg>
<div class="t lbl" style="left:1204.0px;top:378.5px;font-size:12px;line-height:16px;color:#fff;letter-spacing:-0.53px;">SP TimeSync</div>
<svg class="abs" style="left:1221px;top:427px;overflow:visible" width="32" height="32" viewBox="0 0 32 32"><rect x="12" y="0" width="9" height="3" fill="#f2e000"/><path d="M10 3 H23 L20 9 H13Z" fill="#c8c8c8" stroke="#888" stroke-width=".6"/><rect x="14" y="9" width="5" height="5" fill="#9a9a9a"/><path d="M4 18 L16 13 L28 18" stroke="#7a7a7a" fill="none" stroke-width="1.2"/><text x="16" y="29" font-size="10" fill="#8c8c8c" text-anchor="middle" font-family="Liberation Sans, sans-serif">TERM</text></svg>
<div class="t lbl" style="left:1214.0px;top:462.5px;font-size:12px;line-height:16px;color:#fff;letter-spacing:0.08px;">Terminal</div>
<div class="t lbl" style="left:1210.0px;top:476.5px;font-size:12px;line-height:16px;color:#fff;letter-spacing:-0.94px;">1.9b RS232</div>
<svg class="abs" style="left:1221px;top:511px;overflow:visible" width="32" height="32" viewBox="0 0 32 32"><rect x="0" y="1" width="32" height="30" fill="#000"/><rect x="0" y="1" width="32" height="2" fill="#777"/><rect x="13" y="2" width="6" height="2.5" fill="#ff6a6a"/><rect x="13.5" y="5" width="5" height="24" fill="#d8d8d8"/><rect x="12.5" y="9" width="7" height="4" fill="#efefef"/><rect x="12.5" y="17" width="7" height="5" fill="#e4e4e4"/><g transform="translate(0.5,16.3)"><rect x="0" y="0" width="15" height="15" fill="#dfe6f8" stroke="#b4b6ba" stroke-width="1"/><rect x="1" y="1" width="13" height="13" fill="none" stroke="#fafbff" stroke-width="1"/><path d="M4.4 13 C2.6 8 5.4 4.6 9 4.8 L7.4 2.4 L13 2.4 L13 8.4 L11 6.8 C8.4 7.2 7.2 9.6 8.2 13Z" fill="#1c4f9e" stroke="#143a78" stroke-width=".4"/><path d="M8.4 13.6 C8.6 11.2 10.4 10 13.6 10.6 L13.6 13.6Z" fill="#f4f6ff" opacity=".9"/></g></svg>
<div class="t lbl" style="left:1202.5px;top:546.5px;font-size:12px;line-height:16px;color:#fff;letter-spacing:-0.22px;">Fldigi 3.23.21</div>
<svg class="abs" style="left:1221px;top:595px;overflow:visible" width="32" height="32" viewBox="0 0 32 32"><rect x="0.75" y="0.75" width="30.5" height="30.5" fill="#0a0aa8" stroke="#e01010" stroke-width="1.5"/><path d="M6 6 C16 4 27 14 27 26 C18 28 6 18 6 6Z" fill="#dcdcdc" stroke="#fff" stroke-width=".6"/><path d="M8 9 L25 24 M12 6 L27 20 M6 13 L20 27 M16 6 L27 16" stroke="#555" stroke-width=".6"/><path d="M17 15 L24 6" stroke="#fff" stroke-width="1.2"/><circle cx="24" cy="6" r="1.6" fill="#fff"/><g transform="translate(0.5,16.3)"><rect x="0" y="0" width="15" height="15" fill="#dfe6f8" stroke="#b4b6ba" stroke-width="1"/><rect x="1" y="1" width="13" height="13" fill="none" stroke="#fafbff" stroke-width="1"/><path d="M4.4 13 C2.6 8 5.4 4.6 9 4.8 L7.4 2.4 L13 2.4 L13 8.4 L11 6.8 C8.4 7.2 7.2 9.6 8.2 13Z" fill="#1c4f9e" stroke="#143a78" stroke-width=".4"/><path d="M8.4 13.6 C8.6 11.2 10.4 10 13.6 10.6 L13.6 13.6Z" fill="#f4f6ff" opacity=".9"/></g></svg>
<div class="t lbl" style="left:1206.0px;top:630.5px;font-size:12px;line-height:16px;color:#fff;letter-spacing:-0.45px;">MULTIPSK -</div>
<div class="t lbl" style="left:1219.5px;top:644.5px;font-size:12px;line-height:16px;color:#fff;letter-spacing:-0.16px;">Ярлык</div>
<svg class="abs" style="left:1221px;top:679px;overflow:visible" width="32" height="32" viewBox="0 0 32 32"><defs><linearGradient id="gb" x1="0" y1="0" x2="1" y2="0"><stop offset="0" stop-color="#dfe6ea" stop-opacity=".85"/><stop offset=".5" stop-color="#8f9ba3" stop-opacity=".55"/><stop offset="1" stop-color="#e6ecef" stop-opacity=".85"/></linearGradient></defs><path d="M4 3 H28 L25 30 H7Z" fill="url(#gb)" stroke="#d8dde0" stroke-width=".8"/><ellipse cx="16" cy="3.5" rx="12" ry="2.2" fill="#59636b" stroke="#e8eef2" stroke-width=".8"/><path d="M11 12 L15 8 L17 13Z M18 18 L22 13 L23 20Z M10 17 L14 22 L9 22Z" fill="#2d7fe0"/><ellipse cx="16" cy="29" rx="8.5" ry="2" fill="#f2f4f5" opacity=".8"/></svg>
<div class="t lbl" style="left:1214.0px;top:714.5px;font-size:12px;line-height:16px;color:#fff;letter-spacing:0.04px;">Корзина</div>
<svg class="abs" style="left:1146px;top:427px;overflow:visible" width="32" height="32" viewBox="0 0 32 32"><circle cx="16" cy="13" r="15" fill="#f6eef8" stroke="#d02050" stroke-width="1.2"/><path d="M16 13 L4 4 A15 15 0 0 1 28 4Z" fill="#c8c0f0"/><path d="M16 13 L28 4 A15 15 0 0 1 30 19Z" fill="#f0c0e8"/><path d="M1 13 H31 M16 -2 V28" stroke="#c0a0c8" stroke-width=".7"/><rect x="17" y="17" width="10" height="12" fill="#fff"/><text x="19" y="28" font-size="11" fill="#2030a0" font-family="Liberation Sans, sans-serif">3</text><g transform="translate(0.5,16.3)"><rect x="0" y="0" width="15" height="15" fill="#dfe6f8" stroke="#b4b6ba" stroke-width="1"/><rect x="1" y="1" width="13" height="13" fill="none" stroke="#fafbff" stroke-width="1"/><path d="M4.4 13 C2.6 8 5.4 4.6 9 4.8 L7.4 2.4 L13 2.4 L13 8.4 L11 6.8 C8.4 7.2 7.2 9.6 8.2 13Z" fill="#1c4f9e" stroke="#143a78" stroke-width=".4"/><path d="M8.4 13.6 C8.6 11.2 10.4 10 13.6 10.6 L13.6 13.6Z" fill="#f4f6ff" opacity=".9"/></g></svg>
<div class="t lbl" style="left:1144.0px;top:462.5px;font-size:12px;line-height:16px;color:#fff;letter-spacing:-0.21px;">MANA-...</div>
<svg class="abs" style="left:1146px;top:511px;overflow:visible" width="32" height="32" viewBox="0 0 32 32"><circle cx="16" cy="15.5" r="15" fill="#fff" stroke="#c8c8c8" stroke-width=".6"/><path d="M3.6 17 A12.4 12.4 0 0 1 28.4 17 C27 20 24 22.5 21 23 L16 18 L11 23 C8 22.5 5 20 3.6 17Z" fill="#f408f4"/><path d="M8.4 8 C9.6 3.4 22.4 3.4 23.6 8 C23.6 11 20 13.6 16 17 C12 13.6 8.4 11 8.4 8Z" fill="#18e4ec" stroke="#e81020" stroke-width="1"/><path d="M9.6 8.6 Q16 4.6 22.4 8.6 M11 11.6 Q16 8.6 21 11.6" fill="none" stroke="#2030c0" stroke-width=".8"/><path d="M1 16.5 H31 M16 1 V30 M9 9 L27 27" stroke="#000" stroke-width=".9" fill="none"/><rect x="16.6" y="22.4" width="7" height="8.4" fill="#fff"/><text x="17" y="30.4" font-size="10" font-weight="bold" fill="#000" font-family="Liberation Sans, sans-serif">L</text><g transform="translate(0.5,16.3)"><rect x="0" y="0" width="15" height="15" fill="#dfe6f8" stroke="#b4b6ba" stroke-width="1"/><rect x="1" y="1" width="13" height="13" fill="none" stroke="#fafbff" stroke-width="1"/><path d="M4.4 13 C2.6 8 5.4 4.6 9 4.8 L7.4 2.4 L13 2.4 L13 8.4 L11 6.8 C8.4 7.2 7.2 9.6 8.2 13Z" fill="#1c4f9e" stroke="#143a78" stroke-width=".4"/><path d="M8.4 13.6 C8.6 11.2 10.4 10 13.6 10.6 L13.6 13.6Z" fill="#f4f6ff" opacity=".9"/></g></svg>
<div class="t lbl" style="left:1144.0px;top:546.5px;font-size:12px;line-height:16px;color:#fff;letter-spacing:-0.21px;">MANA-...</div>
<svg class="abs" style="left:1146px;top:595px;overflow:visible" width="32" height="32" viewBox="0 0 32 32"><circle cx="16" cy="15" r="15" fill="#fff" stroke="#b0b0b0" stroke-width=".8"/><path d="M2 14 A14 10 0 0 1 30 14 L28 20 H4Z" fill="#d8d0b0" stroke="#d02020" stroke-width="1"/><path d="M8 5 A9 7 0 0 1 24 5 L22 12 L16 18 L10 12Z" fill="#10e0e8" stroke="#2040d0" stroke-width=".8"/><text x="17" y="30" font-size="9" font-weight="bold" fill="#000" font-family="Liberation Sans, sans-serif">BC</text><g transform="translate(0.5,16.3)"><rect x="0" y="0" width="15" height="15" fill="#dfe6f8" stroke="#b4b6ba" stroke-width="1"/><rect x="1" y="1" width="13" height="13" fill="none" stroke="#fafbff" stroke-width="1"/><path d="M4.4 13 C2.6 8 5.4 4.6 9 4.8 L7.4 2.4 L13 2.4 L13 8.4 L11 6.8 C8.4 7.2 7.2 9.6 8.2 13Z" fill="#1c4f9e" stroke="#143a78" stroke-width=".4"/><path d="M8.4 13.6 C8.6 11.2 10.4 10 13.6 10.6 L13.6 13.6Z" fill="#f4f6ff" opacity=".9"/></g></svg>
<div class="t lbl" style="left:1142.0px;top:630.5px;font-size:12px;line-height:16px;color:#fff;letter-spacing:-0.37px;">manarus...</div>
<svg class="abs" style="left:1146px;top:679px;overflow:visible" width="32" height="32" viewBox="0 0 32 32"><g transform="translate(19,13)"><rect x="-2.2" y="-14" width="4.4" height="6" fill="#cfcfcf" transform="rotate(0)"/><rect x="-2.2" y="-14" width="4.4" height="6" fill="#cfcfcf" transform="rotate(36)"/><rect x="-2.2" y="-14" width="4.4" height="6" fill="#cfcfcf" transform="rotate(72)"/><rect x="-2.2" y="-14" width="4.4" height="6" fill="#cfcfcf" transform="rotate(108)"/><rect x="-2.2" y="-14" width="4.4" height="6" fill="#cfcfcf" transform="rotate(144)"/><rect x="-2.2" y="-14" width="4.4" height="6" fill="#cfcfcf" transform="rotate(180)"/><rect x="-2.2" y="-14" width="4.4" height="6" fill="#cfcfcf" transform="rotate(216)"/><rect x="-2.2" y="-14" width="4.4" height="6" fill="#cfcfcf" transform="rotate(252)"/><rect x="-2.2" y="-14" width="4.4" height="6" fill="#cfcfcf" transform="rotate(288)"/><rect x="-2.2" y="-14" width="4.4" height="6" fill="#cfcfcf" transform="rotate(324)"/><circle r="10.5" fill="none" stroke="#d4d4d4" stroke-width="3"/><circle r="6" fill="none" stroke="#bdbdbd" stroke-width="1.6"/><circle r="2.6" fill="none" stroke="#e4e4e4" stroke-width="1.2"/></g><g transform="translate(0.5,16.3)"><rect x="0" y="0" width="15" height="15" fill="#dfe6f8" stroke="#b4b6ba" stroke-width="1"/><rect x="1" y="1" width="13" height="13" fill="none" stroke="#fafbff" stroke-width="1"/><path d="M4.4 13 C2.6 8 5.4 4.6 9 4.8 L7.4 2.4 L13 2.4 L13 8.4 L11 6.8 C8.4 7.2 7.2 9.6 8.2 13Z" fill="#1c4f9e" stroke="#143a78" stroke-width=".4"/><path d="M8.4 13.6 C8.6 11.2 10.4 10 13.6 10.6 L13.6 13.6Z" fill="#f4f6ff" opacity=".9"/></g></svg>
<div class="t lbl" style="left:1134.5px;top:714.5px;font-size:12px;line-height:16px;color:#fff;letter-spacing:-0.00px;">АА_NEC...</div>
<div class="t lbl" style="left:1142.5px;top:728.5px;font-size:12px;line-height:16px;color:#fff;letter-spacing:-0.16px;">- Ярлык</div>
<svg class="abs" style="left:21px;top:427px;overflow:visible" width="32" height="32" viewBox="0 0 32 32"><rect x="0" y="0" width="32" height="31.5" fill="#e6eff9"/><rect x="5.5" y="2.5" width="21" height="17" fill="#d4e3f6" stroke="#5f93d4" stroke-width="1.4"/><circle cx="23.5" cy="15.5" r="5.5" fill="#f6f8fc"/><circle cx="23.5" cy="15.5" r="3.3" fill="#ee4458"/><rect x="8" y="24" width="9" height="2.6" fill="#a0b4c8"/><g transform="translate(0.5,16.3)"><rect x="0" y="0" width="15" height="15" fill="#dfe6f8" stroke="#b4b6ba" stroke-width="1"/><rect x="1" y="1" width="13" height="13" fill="none" stroke="#fafbff" stroke-width="1"/><path d="M4.4 13 C2.6 8 5.4 4.6 9 4.8 L7.4 2.4 L13 2.4 L13 8.4 L11 6.8 C8.4 7.2 7.2 9.6 8.2 13Z" fill="#1c4f9e" stroke="#143a78" stroke-width=".4"/><path d="M8.4 13.6 C8.6 11.2 10.4 10 13.6 10.6 L13.6 13.6Z" fill="#f4f6ff" opacity=".9"/></g></svg>
<div class="t lbl" style="left:6.0px;top:462.5px;font-size:12px;line-height:16px;color:#fff;letter-spacing:-0.28px;">iSpring Free</div>
<div class="t lbl" style="left:20.5px;top:476.5px;font-size:12px;line-height:16px;color:#fff;letter-spacing:-0.47px;">Cam 8</div>
<svg class="abs" style="left:21px;top:511px;overflow:visible" width="32" height="32" viewBox="0 0 32 32"><rect x="0" y="0" width="32" height="31" rx="4" fill="#f6f6f6"/><text x="1" y="13" font-size="14" font-weight="bold" fill="#e01020" font-family="Liberation Sans, sans-serif" transform="rotate(-12 8 10)">City</text><path d="M19 10 C17 16 20 22 18 30 L23 30 C24 22 22 16 24 10Z" fill="#e01020"/><circle cx="28" cy="19" r="2.6" fill="#e01020"/><path d="M6 14 C12 13 18 16 20 22" stroke="#d8d8e8" stroke-width="3" fill="none"/><g transform="translate(0.5,16.3)"><rect x="0" y="0" width="15" height="15" fill="#dfe6f8" stroke="#b4b6ba" stroke-width="1"/><rect x="1" y="1" width="13" height="13" fill="none" stroke="#fafbff" stroke-width="1"/><path d="M4.4 13 C2.6 8 5.4 4.6 9 4.8 L7.4 2.4 L13 2.4 L13 8.4 L11 6.8 C8.4 7.2 7.2 9.6 8.2 13Z" fill="#1c4f9e" stroke="#143a78" stroke-width=".4"/><path d="M8.4 13.6 C8.6 11.2 10.4 10 13.6 10.6 L13.6 13.6Z" fill="#f4f6ff" opacity=".9"/></g></svg>
<div class="t lbl" style="left:7.0px;top:546.5px;font-size:12px;line-height:16px;color:#fff;letter-spacing:-0.06px;">CityInfo 3.0</div>
<svg class="abs" style="left:21px;top:595px;overflow:visible" width="32" height="32" viewBox="0 0 32 32"><rect x="4" y="0" width="23" height="29" fill="#fff" stroke="#c8a060" stroke-width=".6"/><rect x="4" y="0" width="5" height="16" fill="#e00010"/><rect x="9" y="0" width="18" height="2.5" fill="#d8b030"/><path d="M9 5.9 H27" stroke="#d06060" stroke-width=".7"/><path d="M9 9.3 H27" stroke="#d06060" stroke-width=".7"/><path d="M9 12.7 H27" stroke="#d06060" stroke-width=".7"/><path d="M9 16.1 H27" stroke="#d06060" stroke-width=".7"/><path d="M9 19.5 H27" stroke="#d06060" stroke-width=".7"/><path d="M9 22.9 H27" stroke="#d06060" stroke-width=".7"/><path d="M9 26.3 H27" stroke="#d06060" stroke-width=".7"/><path d="M15 2 V29 M21 2 V29" stroke="#d06060" stroke-width=".7"/><g transform="translate(0.5,16.3)"><rect x="0" y="0" width="15" height="15" fill="#dfe6f8" stroke="#b4b6ba" stroke-width="1"/><rect x="1" y="1" width="13" height="13" fill="none" stroke="#fafbff" stroke-width="1"/><path d="M4.4 13 C2.6 8 5.4 4.6 9 4.8 L7.4 2.4 L13 2.4 L13 8.4 L11 6.8 C8.4 7.2 7.2 9.6 8.2 13Z" fill="#1c4f9e" stroke="#143a78" stroke-width=".4"/><path d="M8.4 13.6 C8.6 11.2 10.4 10 13.6 10.6 L13.6 13.6Z" fill="#f4f6ff" opacity=".9"/></g></svg>
<div class="t lbl" style="left:11.0px;top:630.5px;font-size:12px;line-height:16px;color:#fff;letter-spacing:-0.27px;">TablePro -</div>
<div class="t lbl" style="left:19.5px;top:644.5px;font-size:12px;line-height:16px;color:#fff;letter-spacing:-0.16px;">Ярлык</div>
<svg class="abs" style="left:21px;top:679px;overflow:visible" width="32" height="32" viewBox="0 0 32 32"><ellipse cx="17" cy="14" rx="15" ry="15" fill="#fff" stroke="#2020a0" stroke-width="1.6"/><text x="17" y="16" font-size="11" font-weight="bold" fill="#2030b0" text-anchor="middle" font-family="Liberation Sans, sans-serif" textLength="24" lengthAdjust="spacingAndGlyphs">dream</text><rect x="13" y="8" width="7" height="9" fill="none"/><text x="16" y="16" font-size="11" font-weight="bold" fill="#e01020" text-anchor="middle" font-family="Liberation Sans, sans-serif">e</text><g transform="translate(0.5,16.3)"><rect x="0" y="0" width="15" height="15" fill="#dfe6f8" stroke="#b4b6ba" stroke-width="1"/><rect x="1" y="1" width="13" height="13" fill="none" stroke="#fafbff" stroke-width="1"/><path d="M4.4 13 C2.6 8 5.4 4.6 9 4.8 L7.4 2.4 L13 2.4 L13 8.4 L11 6.8 C8.4 7.2 7.2 9.6 8.2 13Z" fill="#1c4f9e" stroke="#143a78" stroke-width=".4"/><path d="M8.4 13.6 C8.6 11.2 10.4 10 13.6 10.6 L13.6 13.6Z" fill="#f4f6ff" opacity=".9"/></g></svg>
<div class="t lbl" style="left:17.0px;top:714.5px;font-size:12px;line-height:16px;color:#fff;letter-spacing:-0.19px;">dream -</div>
<div class="t lbl" style="left:19.5px;top:728.5px;font-size:12px;line-height:16px;color:#fff;letter-spacing:-0.16px;">Ярлык</div>
<div class="abs" style="left:0;top:0;width:1205px;height:431px;background:#5a5a5a;border:1px solid #161616;border-top:none;border-radius:0 6px 6px 6px;overflow:hidden;box-shadow:0 0 12px rgba(0,0,0,.7)">
<div class="abs" style="left:0;top:0;width:1205px;height:30px;background:linear-gradient(#2e2e2e 0,#2e2e2e 1px,#a8a8a8 1px,#909090 2px,#606060 3px,#585858 60%,#505050 100%)"></div>
<div class="abs" style="left:0;top:2px;width:1205px;height:27px;opacity:.35;background:repeating-linear-gradient(115deg,rgba(255,255,255,0) 0,rgba(255,255,255,.28) 60px,rgba(255,255,255,0) 130px,rgba(0,0,0,.25) 200px,rgba(255,255,255,0) 260px)"></div>
<div class="abs" style="left:173px;top:9px;width:26px;height:26px;border-radius:45%;background:#c8ccc8;filter:blur(3px);opacity:0.55"></div>
<div class="abs" style="left:249px;top:9px;width:28px;height:26px;border-radius:45%;background:#2f7fc8;filter:blur(3px);opacity:0.7"></div>
<div class="abs" style="left:324px;top:9px;width:26px;height:26px;border-radius:45%;background:#5aa8f0;filter:blur(3px);opacity:0.7"></div>
<div class="abs" style="left:398px;top:9px;width:28px;height:26px;border-radius:45%;background:#2a88c0;filter:blur(3px);opacity:0.7"></div>
<div class="abs" style="left:474px;top:9px;width:26px;height:26px;border-radius:45%;background:#4aa0f0;filter:blur(3px);opacity:0.7"></div>
<div class="abs" style="left:621px;top:9px;width:32px;height:26px;border-radius:3px;background:#28c868;filter:blur(3px);opacity:0.9"></div>
<div class="abs" style="left:697px;top:9px;width:28px;height:26px;border-radius:45%;background:#2a90e8;filter:blur(3px);opacity:0.8"></div>
<div class="abs" style="left:773px;top:9px;width:26px;height:26px;border-radius:45%;background:#14243c;filter:blur(3px);opacity:0.8"></div>
<div class="abs" style="left:923px;top:9px;width:28px;height:26px;border-radius:45%;background:#c87818;filter:blur(3px);opacity:0.8"></div>
<div class="abs" style="left:999px;top:9px;width:24px;height:26px;border-radius:45%;background:#5a6a78;filter:blur(3px);opacity:0.4"></div>
<div class="abs" style="left:1071px;top:9px;width:30px;height:26px;border-radius:3px;background:#2a9a50;filter:blur(3px);opacity:0.8"></div>
<div class="abs" style="left:1146px;top:9px;width:30px;height:26px;border-radius:45%;background:#38a888;filter:blur(3px);opacity:0.7"></div>
<div class="abs" style="left:927px;top:6px;width:22px;height:10px;border-radius:40%;background:#1a1410;filter:blur(3px);opacity:.8"></div>
<div class="abs" style="left:331px;top:20px;width:12px;height:10px;border-radius:50%;background:#e8f0ff;filter:blur(3px);opacity:.6"></div>
<div class="abs" style="left:481px;top:20px;width:12px;height:10px;border-radius:50%;background:#e8f0ff;filter:blur(3px);opacity:.6"></div>
<div class="abs" style="left:705px;top:20px;width:12px;height:10px;border-radius:50%;background:#e8f0ff;filter:blur(3px);opacity:.6"></div>
<div class="abs" style="left:1px;top:30px;width:5px;height:396px;background:linear-gradient(#8c8c8c 0,#5a5a5a 110px,#3e3e3e 100%)"></div>
<div class="abs" style="left:1198px;top:30px;width:6px;height:396px;background:linear-gradient(90deg,#555,#7d7d7d 60%,#9a9a9a)"></div>
<div class="abs" style="left:1px;top:425px;width:1203px;height:5px;background:linear-gradient(#1a1a1a,#555 30%,#4a4a4a 70%,#777)"></div>
<div class="abs" style="left:14px;top:4px;width:150px;height:22px;border-radius:11px;background:rgba(255,255,255,.55);filter:blur(7px)"></div>
</div>
<svg class="abs" style="left:7px;top:6px" width="17" height="17" viewBox="0 0 32 32"><defs><radialGradient id="gg7" cx=".58" cy=".6" r=".62"><stop offset="0" stop-color="#7088ff"/><stop offset=".55" stop-color="#3a48ff"/><stop offset="1" stop-color="#1a1cc8"/></radialGradient></defs><circle cx="16" cy="16" r="15.6" fill="url(#gg7)"/><path d="M9 3.2 C11 1.4 14 0.6 17 0.5 C20 0.4 23 1.4 25 3 C27.4 5 29.6 8 30.8 11.5 C31.4 14 31.2 16.5 30.6 18 C29.6 17.6 28.8 16.4 28.2 14.6 C27.8 12.4 26.8 10.2 25.4 8.4 C24 6.6 22 5.2 19.6 4.6 C17.6 4.2 15.6 4 13.6 4.6 L12 5.4 L13.4 6.6 L16.4 6 L18.6 6.8 L21 8.8 L19.6 10 L18.2 9 L16.4 9.4 L18.4 11.6 L19.8 14.6 L18.8 16.6 L17.6 18.2 L16.4 16.8 L15 15.8 L12.4 16.2 L9.4 16 L8.6 12.6 L8 9 L9.6 7 L8.4 5.6Z" fill="#1ee83a"/><path d="M15.4 11 L16.6 10.6 L17.2 12.4 L16 12.8Z" fill="#3a48ff"/><path d="M16.8 25.6 C18.6 24.6 21.4 24.6 23.6 25 L26.6 25.6 C26 27.4 24.6 29 22.8 30 C21.2 30.9 19.6 31.3 18.4 31.2 C17.4 29.8 16.4 27.6 16.8 25.6Z" fill="#1ee83a"/></svg>
<div class="t " style="left:28.0px;top:6.5px;font-size:12px;line-height:16px;color:#000;letter-spacing:-0.14px;">WSJT-X - Wide Graph</div>
<div class="abs" style="left:1096px;top:0px;width:104px;height:20px;border:1px solid rgba(255,255,255,.42);border-top:none;border-radius:0 0 5px 5px;box-shadow:0 0 0 1px rgba(0,0,0,.45);background:linear-gradient(rgba(255,255,255,.22),rgba(255,255,255,.08) 45%,rgba(0,0,0,.10) 50%,rgba(255,255,255,.05));"></div><div class="abs" style="left:1124px;top:0px;width:1px;height:19px;background:rgba(255,255,255,.42);box-shadow:1px 0 0 rgba(0,0,0,.35)"></div><div class="abs" style="left:1151px;top:0px;width:1px;height:19px;background:rgba(255,255,255,.42);box-shadow:1px 0 0 rgba(0,0,0,.35)"></div><div class="abs" style="left:1106.5px;top:9px;width:12px;height:5px;background:#fff;border:1px solid #4a4a4a;border-radius:1px"></div><div class="abs" style="left:1134px;top:4.5px;width:11px;height:9px;border:2px solid #b4b4b4;border-top-width:2.5px;outline:1px solid rgba(60,60,60,.75);border-radius:1px"></div><svg class="abs" style="left:1169px;top:3.5px" width="14" height="11" viewBox="0 0 14 11"><path d="M1.2 1 L4.6 1 L7 3.8 L9.4 1 L12.8 1 L8.8 5.5 L12.8 10 L9.4 10 L7 7.2 L4.6 10 L1.2 10 L5.2 5.5Z" fill="#fff" stroke="#444" stroke-width=".8"/></svg>
<div class="" style="position:absolute;left:6px;top:29px;width:1193px;height:397px;background:#0b0b0b"></div>
<div class="" style="position:absolute;left:7px;top:30px;width:1191px;height:30px;background:#fff"></div>
<div class="cb" style="left:12px;top:33px;"></div>
<svg class="abs" style="left:13px;top:34px" width="11" height="11" viewBox="0 0 11 11"><path d="M2.2 4.6 L4.4 8.6 L8.8 1.6" fill="none" stroke="#2a4fa8" stroke-width="1.9"/></svg>
<div class="t " style="left:30.0px;top:32.0px;font-size:11px;line-height:15px;color:#000;letter-spacing:-0.25px;">Controls</div>
<svg class="abs" style="left:8px;top:30px" width="1190" height="30" viewBox="8 30 1190 30"><path d="M52.5 54 V60" stroke="#000" stroke-width="1"/><path d="M98.5 54 V60" stroke="#000" stroke-width="1"/><path d="M143.5 48 V60" stroke="#000" stroke-width="1"/><path d="M188.5 54 V60" stroke="#000" stroke-width="1"/><path d="M234.5 54 V60" stroke="#000" stroke-width="1"/><path d="M279.5 54 V60" stroke="#000" stroke-width="1"/><path d="M325.5 54 V60" stroke="#000" stroke-width="1"/><path d="M370.5 48 V60" stroke="#000" stroke-width="1"/><path d="M415.5 54 V60" stroke="#000" stroke-width="1"/><path d="M461.5 54 V60" stroke="#000" stroke-width="1"/><path d="M506.5 54 V60" stroke="#000" stroke-width="1"/><path d="M552.5 54 V60" stroke="#000" stroke-width="1"/><path d="M597.5 48 V60" stroke="#000" stroke-width="1"/><path d="M642.5 54 V60" stroke="#000" stroke-width="1"/><path d="M688.5 54 V60" stroke="#000" stroke-width="1"/><path d="M733.5 54 V60" stroke="#000" stroke-width="1"/><path d="M779.5 54 V60" stroke="#000" stroke-width="1"/><path d="M824.5 48 V60" stroke="#000" stroke-width="1"/><path d="M869.5 54 V60" stroke="#000" stroke-width="1"/><path d="M915.5 54 V60" stroke="#000" stroke-width="1"/><path d="M960.5 54 V60" stroke="#000" stroke-width="1"/><path d="M1006.5 54 V60" stroke="#000" stroke-width="1"/><path d="M1051.5 48 V60" stroke="#000" stroke-width="1"/><path d="M1096.5 54 V60" stroke="#000" stroke-width="1"/><path d="M1142.5 54 V60" stroke="#000" stroke-width="1"/><path d="M1187.5 54 V60" stroke="#000" stroke-width="1"/><path d="M77 52 V47 H97 V52" fill="none" stroke="#ff1010" stroke-width="2.4"/><path d="M755 52 V58 H775 V52" fill="none" stroke="#10f018" stroke-width="2.4"/></svg>
<div class="t " style="left:130.4px;top:31.0px;font-size:15px;line-height:19px;color:#000;letter-spacing:0.41px;">500</div>
<div class="t " style="left:353.0px;top:31.0px;font-size:15px;line-height:19px;color:#000;letter-spacing:0.41px;">1000</div>
<div class="t " style="left:580.0px;top:31.0px;font-size:15px;line-height:19px;color:#000;letter-spacing:0.41px;">1500</div>
<div class="t " style="left:807.0px;top:31.0px;font-size:15px;line-height:19px;color:#000;letter-spacing:0.41px;">2000</div>
<div class="t " style="left:1034.0px;top:31.0px;font-size:15px;line-height:19px;color:#000;letter-spacing:0.41px;">2500</div>
<svg class="abs" style="left:7px;top:60px" width="1191" height="213" viewBox="0 0 1191 213"><defs><filter id="wf" x="0" y="0" width="100%" height="100%" color-interpolation-filters="sRGB"><feTurbulence type="fractalNoise" baseFrequency="0.85 0.3" numOctaves="2" seed="11"/><feColorMatrix type="matrix" values="1 0 0 0 0  1 0 0 0 0  1 0 0 0 0  0 0 0 0 1"/><feComponentTransfer><feFuncR type="table" tableValues="0 0 0 0 0 0 0 0 0 0 0 0 0.01 0.03 0.06 0.1 0.12 0.12 0.12 0.12 0.12"/><feFuncG type="table" tableValues="0 0 0 0 0 0 0 0 0 0 0.01 0.03 0.06 0.1 0.15 0.2 0.25 0.25 0.25 0.25 0.25"/><feFuncB type="table" tableValues="0 0 0 0 0 0 0 0 0.2 0.6 0.72 0.8 0.86 0.92 0.97 1 1 1 1 1 1"/></feComponentTransfer></filter></defs><rect width="1191" height="213" fill="#0000c0"/><rect width="1191" height="213" filter="url(#wf)"/></svg>
<div class="" style="position:absolute;left:7px;top:95px;width:1191px;height:1px;background:#19f019"></div>
<div class="t " style="left:12.0px;top:81.5px;font-size:11px;line-height:15px;color:#fff;letter-spacing:0.13px;">06:41:45   2m</div>
<div class="" style="position:absolute;left:7px;top:147px;width:1191px;height:1px;background:#19f019"></div>
<div class="t " style="left:12.0px;top:133.5px;font-size:11px;line-height:15px;color:#fff;letter-spacing:0.13px;">06:41:30   2m</div>
<div class="" style="position:absolute;left:7px;top:199px;width:1191px;height:1px;background:#19f019"></div>
<div class="t " style="left:12.0px;top:185.5px;font-size:11px;line-height:15px;color:#fff;letter-spacing:0.13px;">06:41:15   2m</div>
<div class="" style="position:absolute;left:7px;top:251px;width:1191px;height:1px;background:#19f019"></div>
<div class="t " style="left:12.0px;top:237.5px;font-size:11px;line-height:15px;color:#fff;letter-spacing:0.13px;">06:41:00   2m</div>
<div class="" style="position:absolute;left:7px;top:273px;width:1191px;height:103px;background:linear-gradient(#000 0,#000 1px,#00008c 1px,#00006c 40%,#000028 75%,#000 88%)"></div>
<svg class="abs" style="left:0;top:273px" width="1205" height="102" viewBox="0 273 1205 102"><path d="M9.5 287.5 H1196" stroke="#f0f0f0" stroke-width="1" stroke-dasharray="1 2.29" fill="none"/><path d="M9.5 302.5 H1196" stroke="#f0f0f0" stroke-width="1" stroke-dasharray="1 2.29" fill="none"/><path d="M9.5 317.5 H1196" stroke="#f0f0f0" stroke-width="1" stroke-dasharray="1 2.29" fill="none"/><path d="M9.5 331.5 H1196" stroke="#f0f0f0" stroke-width="1" stroke-dasharray="1 2.29" fill="none"/><path d="M9.5 346.5 H1196" stroke="#f0f0f0" stroke-width="1" stroke-dasharray="1 2.29" fill="none"/><path d="M9.5 361.5 H1196" stroke="#f0f0f0" stroke-width="1" stroke-dasharray="1 2.29" fill="none"/></svg>
<svg class="abs" style="left:0;top:0" width="1205" height="431"><polyline points="7,357.4 9,358.8 11,359.8 13,361.4 15,360.7 17,360.4 19,361.7 21,362.3 23,361.9 25,361.2 27,361.7 29,363.0 31,362.2 33,359.6 35,360.0 37,361.3 39,361.6 41,361.4 43,361.6 45,360.5 47,360.3 49,361.8 51,360.6 53,362.6 55,362.1 57,359.6 59,361.0 61,361.9 63,362.5 65,360.9 67,361.1 69,359.3 71,359.8 73,359.2 75,360.9 77,361.5 79,362.8 81,362.1 83,360.6 85,362.1 87,361.0 89,360.4 91,361.3 93,360.3 95,359.8 97,360.3 99,361.2 101,359.7 103,358.6 105,360.0 107,361.0 109,362.1 111,358.1 113,360.2 115,360.8 117,359.9 119,360.3 121,360.6 123,359.4 125,359.5 127,362.0 129,358.7 131,361.9 133,361.6 135,360.1 137,359.2 139,362.1 141,361.6 143,360.0 145,358.9 147,359.8 149,362.1 151,362.4 153,361.6 155,361.9 157,363.1 159,360.0 161,359.2 163,358.4 165,358.8 167,361.8 169,360.5 171,360.6 173,362.1 175,359.4 177,361.7 179,361.0 181,359.7 183,361.8 185,362.1 187,359.9 189,358.8 191,359.5 193,362.2 195,361.5 197,359.5 199,361.0 201,360.5 203,361.4 205,360.1 207,360.3 209,359.9 211,359.4 213,362.0 215,362.0 217,362.9 219,361.4 221,361.7 223,359.3 225,362.0 227,359.5 229,360.1 231,359.5 233,360.8 235,361.7 237,360.0 239,361.9 241,359.8 243,361.7 245,359.3 247,361.2 249,359.9 251,361.5 253,361.2 255,362.0 257,361.3 259,359.9 261,358.8 263,361.4 265,360.8 267,362.2 269,359.9 271,360.3 273,362.1 275,362.1 277,360.5 279,360.9 281,362.6 283,360.4 285,360.0 287,359.8 289,361.2 291,359.6 293,359.8 295,358.7 297,360.7 299,361.4 301,359.4 303,358.5 305,361.5 307,359.9 309,359.8 311,361.4 313,360.9 315,361.9 317,361.5 319,361.4 321,359.1 323,358.9 325,358.9 327,360.1 329,360.1 331,361.8 333,362.0 335,362.2 337,360.0 339,356.2 341,358.9 343,359.8 345,358.9 347,361.1 349,361.5 351,359.2 353,361.6 355,360.2 357,359.6 359,359.5 361,359.7 363,357.4 365,361.3 367,361.2 369,362.5 371,361.6 373,359.6 375,358.7 377,360.9 379,361.8 381,359.9 383,362.4 385,361.9 387,361.5 389,361.7 391,360.2 393,360.7 395,362.0 397,360.6 399,359.7 401,359.2 403,358.7 405,360.4 407,360.0 409,359.6 411,359.1 413,359.0 415,361.2 417,362.6 419,362.2 421,359.4 423,358.6 425,359.4 427,360.7 429,359.1 431,359.9 433,362.3 435,362.5 437,362.5 439,360.5 441,357.1 443,360.6 445,359.5 447,360.9 449,360.9 451,361.2 453,361.5 455,362.1 457,362.3 459,360.4 461,360.9 463,361.2 465,360.1 467,360.2 469,361.7 471,360.7 473,359.8 475,361.6 477,362.6 479,360.7 481,361.2 483,362.4 485,361.1 487,359.6 489,358.8 491,356.8 493,361.3 495,362.5 497,361.6 499,360.0 501,360.1 503,360.2 505,359.3 507,359.7 509,361.9 511,360.5 513,362.2 515,361.7 517,362.9 519,359.7 521,358.9 523,360.4 525,361.6 527,363.0 529,362.5 531,360.1 533,359.6 535,360.5 537,359.8 539,359.8 541,361.2 543,359.8 545,360.4 547,358.9 549,361.6 551,360.7 553,360.8 555,361.2 557,362.7 559,359.6 561,359.5 563,362.0 565,363.1 567,362.0 569,361.7 571,359.6 573,360.0 575,362.3 577,361.3 579,360.5 581,360.1 583,357.9 585,361.3 587,362.2 589,360.6 591,361.4 593,361.4 595,362.1 597,362.0 599,362.7 601,362.0 603,360.9 605,360.3 607,361.8 609,359.7 611,360.9 613,360.5 615,358.9 617,360.3 619,362.0 621,359.6 623,361.2 625,362.2 627,359.9 629,358.6 631,360.8 633,361.2 635,362.8 637,363.0 639,362.0 641,362.5 643,363.1 645,360.4 647,361.6 649,360.7 651,361.9 653,360.8 655,360.2 657,361.4 659,361.9 661,362.9 663,360.5 665,362.3 667,359.5 669,359.4 671,359.2 673,361.4 675,362.4 677,360.3 679,359.7 681,358.0 683,361.5 685,360.3 687,362.1 689,362.8 691,362.6 693,361.5 695,362.6 697,360.9 699,362.4 701,359.6 703,359.0 705,359.1 707,361.2 709,361.0 711,361.2 713,359.2 715,360.1 717,359.8 719,362.3 721,360.3 723,361.9 725,363.0 727,362.4 729,360.2 731,359.7 733,362.2 735,359.8 737,360.0 739,360.2 741,359.0 743,360.3 745,359.7 747,360.7 749,362.6 751,361.9 753,361.7 755,359.9 757,358.9 759,358.3 761,361.1 763,362.0 765,362.2 767,360.5 769,358.9 771,357.5 773,359.4 775,360.9 777,361.0 779,361.4 781,360.3 783,359.2 785,361.0 787,359.1 789,361.3 791,362.4 793,362.8 795,360.0 797,359.8 799,362.3 801,361.5 803,360.6 805,361.4 807,359.9 809,361.7 811,362.2 813,360.0 815,360.3 817,359.2 819,358.4 821,361.8 823,362.2 825,361.6 827,362.5 829,361.6 831,362.1 833,359.4 835,359.8 837,359.0 839,361.9 841,361.5 843,361.8 845,362.2 847,362.1 849,360.0 851,361.9 853,362.1 855,362.7 857,360.1 859,360.1 861,361.7 863,359.3 865,361.2 867,361.9 869,360.2 871,356.7 873,359.0 875,361.9 877,359.5 879,360.7 881,359.0 883,360.1 885,361.6 887,359.6 889,360.5 891,360.1 893,362.3 895,362.8 897,359.7 899,358.9 901,360.6 903,360.9 905,361.5 907,360.9 909,361.1 911,359.7 913,361.7 915,362.0 917,361.9 919,361.6 921,361.2 923,359.4 925,361.8 927,359.6 929,359.7 931,360.4 933,360.1 935,356.7 937,360.4 939,360.3 941,362.2 943,360.2 945,361.6 947,357.1 949,360.2 951,362.2 953,359.6 955,359.6 957,359.0 959,358.5 961,358.7 963,361.8 965,361.1 967,361.9 969,360.6 971,358.9 973,359.6 975,359.9 977,358.6 979,359.1 981,358.6 983,358.3 985,359.7 987,358.8 989,360.0 991,358.8 993,359.2 995,361.9 997,362.3 999,361.9 1001,362.2 1003,362.1 1005,359.8 1007,360.9 1009,359.6 1011,359.6 1013,359.8 1015,358.9 1017,360.7 1019,361.4 1021,359.7 1023,358.8 1025,358.5 1027,360.2 1029,359.0 1031,361.0 1033,361.0 1035,362.5 1037,362.9 1039,361.2 1041,359.7 1043,361.9 1045,361.1 1047,359.8 1049,361.6 1051,360.0 1053,359.9 1055,361.8 1057,359.6 1059,361.0 1061,357.2 1063,357.5 1065,358.1 1067,358.2 1069,359.0 1071,361.9 1073,361.4 1075,360.5 1077,360.2 1079,361.3 1081,362.5 1083,362.4 1085,359.6 1087,361.9 1089,362.6 1091,362.9 1093,359.7 1095,360.0 1097,359.7 1099,360.4 1101,360.9 1103,360.5 1105,362.3 1107,361.1 1109,359.8 1111,360.3 1113,357.3 1115,359.5 1117,360.8 1119,362.5 1121,359.7 1123,358.8 1125,360.2 1127,359.1 1129,360.1 1131,361.7 1133,362.3 1135,359.8 1137,361.6 1139,361.9 1141,360.3 1143,361.1 1145,362.5 1147,359.7 1149,361.5 1151,359.7 1153,360.0 1155,358.0 1157,360.5 1159,358.6 1161,360.9 1163,362.2 1165,363.1 1167,360.9 1169,359.7 1171,358.6 1173,359.5 1175,358.7 1177,361.5 1179,361.7 1181,362.7 1183,361.4 1185,362.1 1187,363.1 1189,359.9 1191,360.2 1193,360.9 1195,359.9 1197,359.2" fill="none" stroke="#10f010" stroke-width="1.35"/></svg>
<div class="" style="position:absolute;left:7px;top:376px;width:1191px;height:49px;background:#f0f0f0"></div>
<div class="abs" style="left:131px;top:146px;width:1010px;height:608px;border-radius:7px 7px 5px 5px;box-shadow:0 0 9px 1px rgba(0,0,0,.55),0 0 0 1px rgba(0,0,0,.8);background:linear-gradient(#121e8c 0,#1424a0 60px,#16269c 126px,#0a0e58 128px,#080a40 170px,#04040c 215px,#030306 228px,#cfcfcf 230px,#d6d6d6 278px,#6a6a6a 280px,#555 285px,#1a1a1a 287px,#1c1c1c 100%);overflow:hidden">
<div class="abs" style="left:0;top:0;width:1010px;height:608px;border:1px solid rgba(255,255,255,.55);border-radius:7px 7px 5px 5px"></div>
<div class="abs" style="left:1px;top:1px;width:1008px;height:28px;background:linear-gradient(#2a3aa8 0,#141f8c 3px,#0d1678 50%,#101a84 100%)"></div>
<svg class="abs" style="left:1px;top:1px" width="1008" height="28"><defs><filter id="tn" x="0" y="0" width="100%" height="100%"><feTurbulence type="fractalNoise" baseFrequency="0.02 0.09" numOctaves="2" seed="3"/><feColorMatrix type="matrix" values="0 0 0 0 0  0 0 0 0 0.02  0 0 0 0 0.1  2.4 0 0 0 -0.9"/></filter><filter id="tn2" x="0" y="0" width="100%" height="100%"><feTurbulence type="fractalNoise" baseFrequency="0.03 0.1" numOctaves="2" seed="8"/><feColorMatrix type="matrix" values="0 0 0 0 0.16  0 0 0 0 0.24  0 0 0 0 0.85  2.2 0 0 0 -1.0"/></filter></defs><rect width="100%" height="28" filter="url(#tn)" opacity=".55"/><rect width="100%" height="28" filter="url(#tn2)" opacity=".45"/></svg>
<div class="abs" style="left:1px;top:27px;width:1008px;height:1px;background:rgba(120,140,220,.55)"></div>
<div class="abs" style="left:16px;top:5px;width:155px;height:19px;border-radius:10px;background:rgba(235,240,255,.6);filter:blur(6px)"></div>
<div class="abs" style="left:0;top:29px;width:1px;height:576px;background:rgba(255,255,255,.42)"></div>
<div class="abs" style="left:1009px;top:29px;width:1px;height:576px;background:rgba(255,255,255,.42)"></div>
<div class="abs" style="left:2px;top:287px;width:3px;height:318px;background:linear-gradient(90deg,#2c2c2c,#161616)"></div>
<div class="abs" style="left:1004px;top:287px;width:4px;height:318px;background:linear-gradient(90deg,#141414,#2e2e2e)"></div>
<div class="abs" style="left:1px;top:602px;width:1008px;height:5px;background:linear-gradient(#0c0c0c,#1e1e1e 60%,#3a3a3a)"></div>
<div class="abs" style="left:4px;top:607px;width:1002px;height:1px;background:#8a8a8a"></div>
</div>
<svg class="abs" style="left:138px;top:152px" width="16.5" height="16.5" viewBox="0 0 32 32"><defs><radialGradient id="gg138" cx=".58" cy=".6" r=".62"><stop offset="0" stop-color="#7088ff"/><stop offset=".55" stop-color="#3a48ff"/><stop offset="1" stop-color="#1a1cc8"/></radialGradient></defs><circle cx="16" cy="16" r="15.6" fill="url(#gg138)"/><path d="M9 3.2 C11 1.4 14 0.6 17 0.5 C20 0.4 23 1.4 25 3 C27.4 5 29.6 8 30.8 11.5 C31.4 14 31.2 16.5 30.6 18 C29.6 17.6 28.8 16.4 28.2 14.6 C27.8 12.4 26.8 10.2 25.4 8.4 C24 6.6 22 5.2 19.6 4.6 C17.6 4.2 15.6 4 13.6 4.6 L12 5.4 L13.4 6.6 L16.4 6 L18.6 6.8 L21 8.8 L19.6 10 L18.2 9 L16.4 9.4 L18.4 11.6 L19.8 14.6 L18.8 16.6 L17.6 18.2 L16.4 16.8 L15 15.8 L12.4 16.2 L9.4 16 L8.6 12.6 L8 9 L9.6 7 L8.4 5.6Z" fill="#1ee83a"/><path d="M15.4 11 L16.6 10.6 L17.2 12.4 L16 12.8Z" fill="#3a48ff"/><path d="M16.8 25.6 C18.6 24.6 21.4 24.6 23.6 25 L26.6 25.6 C26 27.4 24.6 29 22.8 30 C21.2 30.9 19.6 31.3 18.4 31.2 C17.4 29.8 16.4 27.6 16.8 25.6Z" fill="#1ee83a"/></svg>
<div class="t " style="left:159.5px;top:152.0px;font-size:12px;line-height:16px;color:#000;letter-spacing:-0.39px;">WSJT-X   v2.0.0   by K1JT</div>
<div class="abs" style="left:1031px;top:146px;width:104px;height:20px;border:1px solid rgba(255,255,255,.42);border-top:none;border-radius:0 0 5px 5px;box-shadow:0 0 0 1px rgba(0,0,0,.45);background:linear-gradient(rgba(255,255,255,.22),rgba(255,255,255,.08) 45%,rgba(0,0,0,.10) 50%,rgba(255,255,255,.05));"></div><div class="abs" style="left:1059px;top:146px;width:1px;height:19px;background:rgba(255,255,255,.42);box-shadow:1px 0 0 rgba(0,0,0,.35)"></div><div class="abs" style="left:1086px;top:146px;width:1px;height:19px;background:rgba(255,255,255,.42);box-shadow:1px 0 0 rgba(0,0,0,.35)"></div><div class="abs" style="left:1041.5px;top:155px;width:12px;height:5px;background:#fff;border:1px solid #4a4a4a;border-radius:1px"></div><div class="abs" style="left:1069px;top:150.5px;width:11px;height:9px;border:2px solid #fff;border-top-width:2.5px;outline:1px solid rgba(60,60,60,.75);border-radius:1px"></div><svg class="abs" style="left:1104px;top:149.5px" width="14" height="11" viewBox="0 0 14 11"><path d="M1.2 1 L4.6 1 L7 3.8 L9.4 1 L12.8 1 L8.8 5.5 L12.8 10 L9.4 10 L7 7.2 L4.6 10 L1.2 10 L5.2 5.5Z" fill="#fff" stroke="#444" stroke-width=".8"/></svg>
<div class="" style="position:absolute;left:137px;top:174px;width:998px;height:575px;background:linear-gradient(#2a3590 0,#2a3590 100px,#222 200px,#1a1a1a 201px,#8a8a8a 202px,#8a8a8a 250px,#c8c8c8 260px,#d8d8d8 100%)"></div>
<div class="" style="position:absolute;left:138px;top:175px;width:996px;height:573px;background:#f0f0f0"></div>
<div class="" style="position:absolute;left:138px;top:175px;width:996px;height:18px;background:linear-gradient(#ffffff 0,#f4f6fb 40%,#dfe4f3 55%,#dde2f1 90%,#c4c9dc 100%)"></div>
<div class="t " style="left:145.5px;top:177.5px;font-size:11px;line-height:15px;color:#8a8f9c;letter-spacing:-0.43px;">File</div>
<div class="t " style="left:177.5px;top:177.5px;font-size:11px;line-height:15px;color:#8a8f9c;letter-spacing:-0.07px;">Configurations</div>
<div class="t " style="left:263.5px;top:177.5px;font-size:11px;line-height:15px;color:#8a8f9c;letter-spacing:-0.41px;">View</div>
<div class="t " style="left:301.5px;top:177.5px;font-size:11px;line-height:15px;color:#8a8f9c;letter-spacing:-0.38px;">Mode</div>
<div class="t " style="left:343.0px;top:177.5px;font-size:11px;line-height:15px;color:#8a8f9c;letter-spacing:-0.32px;">Decode</div>
<div class="t " style="left:395.5px;top:177.5px;font-size:11px;line-height:15px;color:#8a8f9c;letter-spacing:-0.27px;">Save</div>
<div class="t " style="left:435.0px;top:177.5px;font-size:11px;line-height:15px;color:#8a8f9c;letter-spacing:0.06px;">Tools</div>
<div class="t " style="left:476.0px;top:177.5px;font-size:11px;line-height:15px;color:#8a8f9c;letter-spacing:-0.41px;">Help</div>
<div class="t " style="left:366.0px;top:204.5px;font-size:11px;line-height:15px;color:#000;letter-spacing:0.00px;">Band Activity</div>
<div class="t " style="left:907.0px;top:204.5px;font-size:11px;line-height:15px;color:#000;letter-spacing:-0.12px;">Rx Frequency</div>
<div class="" style="position:absolute;left:149px;top:224px;width:606px;height:20px;background:#a9a9a9"></div>
<div class="" style="position:absolute;left:760px;top:224px;width:363px;height:20px;background:#a9a9a9"></div>
<div class="t mono" style="left:154.5px;top:227.25px;font-size:13.333px;line-height:16px;color:#000;transform:scaleY(.88);transform-origin:0 11.5px">  UTC   dB   DT Freq    Message</div>
<div class="t mono" style="left:765.5px;top:227.25px;font-size:13.333px;line-height:16px;color:#000;transform:scaleY(.88);transform-origin:0 11.5px">  UTC   dB   DT Freq    Message</div>
<div class="" style="position:absolute;left:149px;top:250px;width:606px;height:216px;background:#fff;border:1px solid #e3e8ef;border-top-color:#abadb3"></div>
<div class="" style="position:absolute;left:760px;top:250px;width:363px;height:216px;background:#fff;border:1px solid #e3e8ef;border-top-color:#abadb3"></div>
<div class="t mono" style="left:154.5px;top:255.75px;font-size:13.333px;line-height:16px;color:#000;transform:scaleY(.88);transform-origin:0 11.5px"><span class="z">0</span>6243<span class="z">0</span>   7  1.1  5<span class="z">0</span>3 ~  RV3YM DL5EBS JO31</div>
<div class="t mono" style="left:154.5px;top:271.75px;font-size:13.333px;line-height:16px;color:#000;transform:scaleY(.88);transform-origin:0 11.5px"><span class="z">0</span>625<span class="z">0</span><span class="z">0</span>   8  1.1  5<span class="z">0</span>3 ~  RV3YM DL5EBS R+1<span class="z">0</span></div>
<div class="t mono" style="left:154.5px;top:287.75px;font-size:13.333px;line-height:16px;color:#000;transform:scaleY(.88);transform-origin:0 11.5px"><span class="z">0</span>6263<span class="z">0</span> -19  1.1  5<span class="z">0</span>4 ~  R5PM DL5EBS R-<span class="z">0</span>6</div>
<div class="t mono" style="left:154.5px;top:303.75px;font-size:13.333px;line-height:16px;color:#000;transform:scaleY(.88);transform-origin:0 11.5px"><span class="z">0</span>628<span class="z">0</span><span class="z">0</span>  18  1.<span class="z">0</span> 1826 ~  RV3YM EW1OW KO33</div>
<div class="t mono" style="left:154.5px;top:319.75px;font-size:13.333px;line-height:16px;color:#000;transform:scaleY(.88);transform-origin:0 11.5px"><span class="z">0</span>6283<span class="z">0</span>  18  1.<span class="z">0</span> 1826 ~  RV3YM EW1OW KO33</div>
<div class="t mono" style="left:154.5px;top:335.75px;font-size:13.333px;line-height:16px;color:#000;transform:scaleY(.88);transform-origin:0 11.5px"><span class="z">0</span>629<span class="z">0</span><span class="z">0</span>  18  1.<span class="z">0</span> 1826 ~  RV3YM EW1OW KO33</div>
<div class="t mono" style="left:154.5px;top:351.75px;font-size:13.333px;line-height:16px;color:#000;transform:scaleY(.88);transform-origin:0 11.5px"><span class="z">0</span>6293<span class="z">0</span>  18  1.<span class="z">0</span> 1827 ~  RV3YM EW1OW KO33</div>
<div class="" style="position:absolute;left:149.5px;top:367px;width:583.5px;height:16px;background:#ff99c0"></div>
<div class="t mono" style="left:154.5px;top:367.75px;font-size:13.333px;line-height:16px;color:#000;transform:scaleY(.88);transform-origin:0 11.5px"><span class="z">0</span>62945 -16  1.3 1178 ~  CQ DX DF2ZC JO3<span class="z">0</span>   EU</div>
<div class="t mono" style="left:154.5px;top:383.75px;font-size:13.333px;line-height:16px;color:#000;transform:scaleY(.88);transform-origin:0 11.5px"><span class="z">0</span>63<span class="z">0</span><span class="z">0</span><span class="z">0</span>  18  1.<span class="z">0</span> 1829 ~  RV3YM EW1OW KO33</div>
<div class="" style="position:absolute;left:149.5px;top:399px;width:583.5px;height:16px;background:#ff99c0"></div>
<div class="t mono" style="left:154.5px;top:399.75px;font-size:13.333px;line-height:16px;color:#000;transform:scaleY(.88);transform-origin:0 11.5px"><span class="z">0</span>63<span class="z">0</span>15 -16  1.3 1178 ~  CQ DX DF2ZC JO3<span class="z">0</span>   EU</div>
<div class="t mono" style="left:154.5px;top:415.75px;font-size:13.333px;line-height:16px;color:#000;transform:scaleY(.88);transform-origin:0 11.5px"><span class="z">0</span>63<span class="z">0</span>15 -18  1.4 155<span class="z">0</span> ~  RM5P ON4KHG JO1<span class="z">0</span></div>
<div class="t mono" style="left:154.5px;top:431.75px;font-size:13.333px;line-height:16px;color:#000;transform:scaleY(.88);transform-origin:0 11.5px"><span class="z">0</span>63<span class="z">0</span>3<span class="z">0</span>  18  1.<span class="z">0</span> 1831 ~  RV3YM EW1OW KO33</div>
<div class="" style="position:absolute;left:149.5px;top:447px;width:583.5px;height:18px;background:#ff99c0"></div>
<div class="t mono" style="left:154.5px;top:447.75px;font-size:13.333px;line-height:16px;color:#000;transform:scaleY(.88);transform-origin:0 11.5px"><span class="z">0</span>63<span class="z">0</span>45  -4  1.<span class="z">0</span>  494 ~  CQ DL5EBS JO31     EU</div>
<div class="t mono" style="left:765.5px;top:255.75px;font-size:13.333px;line-height:16px;color:#000;transform:scaleY(.88);transform-origin:0 11.5px"><span class="z">0</span>63845 -16  1.2 1558 ~  RK2P ON4KHG -2<span class="z">0</span></div>
<div class="t mono" style="left:765.5px;top:271.75px;font-size:13.333px;line-height:16px;color:#000;transform:scaleY(.88);transform-origin:0 11.5px"><span class="z">0</span>63815 -15  1.<span class="z">0</span> 17<span class="z">0</span>5 ~  RQ3P PA3FYC -12</div>
<div class="t mono" style="left:765.5px;top:287.75px;font-size:13.333px;line-height:16px;color:#000;transform:scaleY(.88);transform-origin:0 11.5px"><span class="z">0</span>63815  -7  1.2 1557 ~  RK2P ON4KHG -2<span class="z">0</span></div>
<div class="t mono" style="left:765.5px;top:303.75px;font-size:13.333px;line-height:16px;color:#000;transform:scaleY(.88);transform-origin:0 11.5px"><span class="z">0</span>63745 -18  1.1 1841 ~  RV3YM DL1OLI 73</div>
<div class="abs" style="left:738px;top:251px;width:17px;height:214px;background:linear-gradient(90deg,#e6e6e6,#f3f3f3 30%,#f0f0f0 70%,#e8e8e8);border-left:1px solid #eceff3"></div>
<svg class="abs" style="left:743px;top:257px" width="8" height="5" viewBox="0 0 8 5"><path d="M0 5 L4 0 L8 5Z" fill="#606060"/></svg>
<svg class="abs" style="left:743px;top:455px" width="8" height="5" viewBox="0 0 8 5"><path d="M0 0 L4 5 L8 0Z" fill="#606060"/></svg>
<div class="abs" style="left:739px;top:269px;width:14px;height:45px;border:1px solid #979797;border-radius:2px;background:linear-gradient(90deg,#f5f5f5,#e9e9eb 45%,#d9dadc 50%,#cfd0d3)"></div>
<div class="abs" style="left:742px;top:288px;width:8px;height:1px;background:#7a7a7a"></div>
<div class="abs" style="left:742px;top:290px;width:8px;height:1px;background:#7a7a7a"></div>
<div class="abs" style="left:742px;top:292px;width:8px;height:1px;background:#7a7a7a"></div>
<div class="abs" style="left:1106px;top:251px;width:17px;height:214px;background:linear-gradient(90deg,#e6e6e6,#f3f3f3 30%,#f0f0f0 70%,#e8e8e8);border-left:1px solid #eceff3"></div>
<svg class="abs" style="left:1111px;top:257px" width="8" height="5" viewBox="0 0 8 5"><path d="M0 5 L4 0 L8 5Z" fill="#606060"/></svg>
<svg class="abs" style="left:1111px;top:455px" width="8" height="5" viewBox="0 0 8 5"><path d="M0 0 L4 5 L8 0Z" fill="#606060"/></svg>
<div class="cb" style="left:149px;top:477px;"></div>
<div class="t " style="left:167.0px;top:476.5px;font-size:11px;line-height:15px;color:#000;letter-spacing:-0.39px;">CQ only</div>
<div class="btn" style="left:217px;top:473px;width:99px;height:21px;"></div>
<div class="t " style="left:246.0px;top:477.0px;font-size:11px;line-height:15px;color:#000;letter-spacing:-0.69px;">Log QSO</div>
<div class="btn" style="left:324px;top:473px;width:99px;height:21px;"></div>
<div class="t " style="left:362.5px;top:477.0px;font-size:11px;line-height:15px;color:#000;letter-spacing:-0.16px;">Stop</div>
<div class="abs" style="left:429px;top:473px;width:100px;height:21px;border:1px solid #1c1c1c;border-radius:4px;background:#00ff00"></div>
<div class="t " style="left:460.5px;top:476.5px;font-size:11px;line-height:15px;color:#000;letter-spacing:-0.10px;">Monitor</div>
<div class="btn" style="left:537px;top:473px;width:99px;height:21px;"></div>
<div class="t " style="left:573.0px;top:477.0px;font-size:11px;line-height:15px;color:#000;letter-spacing:-0.35px;">Erase</div>
<div class="btn" style="left:644px;top:473px;width:98px;height:21px;"></div>
<div class="t " style="left:675.2px;top:477.0px;font-size:11px;line-height:15px;color:#000;letter-spacing:-0.40px;">Decode</div>
<div class="btn" style="left:750px;top:473px;width:99px;height:21px;"></div>
<div class="t " style="left:776.0px;top:477.0px;font-size:11px;line-height:15px;color:#000;letter-spacing:-0.26px;">Enable Tx</div>
<div class="btn" style="left:857px;top:473px;width:98px;height:21px;"></div>
<div class="t " style="left:889.0px;top:477.0px;font-size:11px;line-height:15px;color:#000;letter-spacing:-0.09px;">Halt Tx</div>
<div class="btn" style="left:963px;top:473px;width:99px;height:21px;"></div>
<div class="t " style="left:1001.0px;top:477.0px;font-size:11px;line-height:15px;color:#000;letter-spacing:-0.42px;">Tune</div>
<div class="cb" style="left:1069px;top:477px;"></div>
<svg class="abs" style="left:1070px;top:478px" width="11" height="11" viewBox="0 0 11 11"><path d="M2.2 4.6 L4.4 8.6 L8.8 1.6" fill="none" stroke="#2a4fa8" stroke-width="1.9"/></svg>
<div class="t " style="left:1087.0px;top:476.5px;font-size:11px;line-height:15px;color:#000;letter-spacing:-0.61px;">Menus</div>
<div class="edit" style="left:149px;top:509px;width:74px;height:20px"></div>
<div class="t " style="left:154.0px;top:512.0px;font-size:11px;line-height:15px;color:#000;letter-spacing:-1.14px;">2m</div>
<svg class="abs" style="left:209px;top:517px" width="8" height="5" viewBox="0 0 8 5"><path d="M0 0 L4 4.6 L8 0Z" fill="#000"/></svg>
<div class="abs" style="left:229px;top:508px;width:22px;height:22px;border-radius:50%;background:#00ff00;border:1px solid #808080"></div>
<div class="" style="position:absolute;left:257px;top:502px;width:262px;height:35px;background:#000"></div>
<div class="t " style="left:333.0px;top:509.0px;font-size:22px;line-height:24px;color:#ffff20;letter-spacing:-1.12px;">144,174 000</div>
<div class="" style="position:absolute;left:257px;top:544px;width:128px;height:23px;background:#a0acd8"></div>
<div class="" style="position:absolute;left:391px;top:544px;width:128px;height:23px;background:#a0acd8"></div>
<div class="t " style="left:304.5px;top:548.5px;font-size:11px;line-height:15px;color:#000;letter-spacing:-0.61px;">DX Call</div>
<div class="t " style="left:437.5px;top:548.5px;font-size:11px;line-height:15px;color:#000;letter-spacing:-0.59px;">DX Grid</div>
<div class="edit" style="left:257px;top:573px;width:128px;height:20px"></div>
<div class="t " style="left:303.5px;top:577.0px;font-size:11px;line-height:15px;color:#000;letter-spacing:-0.49px;">DL1OLI</div>
<div class="edit" style="left:391px;top:573px;width:128px;height:20px"></div>
<div class="btn" style="left:258px;top:619px;width:126px;height:21px;"></div>
<div class="t " style="left:304.0px;top:623.0px;font-size:11px;line-height:15px;color:#000;letter-spacing:-0.35px;">Lookup</div>
<div class="btn" style="left:392px;top:619px;width:127px;height:21px;"></div>
<div class="t " style="left:446.0px;top:623.0px;font-size:11px;line-height:15px;color:#000;letter-spacing:-0.19px;">Add</div>
<div class="" style="position:absolute;left:258px;top:650px;width:260px;height:61px;background:#000;border-top:1px solid #555;border-left:1px solid #555"></div>
<div class="t " style="left:327.8px;top:657.0px;font-size:20px;line-height:24px;color:#ffff20;letter-spacing:0.40px;">2020 июн 21</div>
<div class="t " style="left:348.0px;top:681.5px;font-size:20px;line-height:24px;color:#ffff20;letter-spacing:0.14px;">06:41:55</div>
<div class="" style="position:absolute;left:149px;top:544px;width:74px;height:169px;background:#f0f0f0;border:1px solid #fff;border-top-color:#a0a0a0;border-left-color:#a0a0a0"></div>
<svg class="abs" style="left:149px;top:544px" width="74" height="169" viewBox="149 544 74 169"><rect x="168" y="650" width="10" height="34.5" fill="#50a850"/><path d="M168 650 L178 647 L178 651 L168 652Z" fill="#50a850"/><path d="M168 644.5 L175 649 L168 653.5Z" fill="#000"/><path d="M178.5 573 V684.5" stroke="#000" stroke-width="1"/><path d="M178 573.5 H184" stroke="#000" stroke-width="1"/><path d="M178 587.4 H182" stroke="#000" stroke-width="1"/><path d="M178 601.2 H184" stroke="#000" stroke-width="1"/><path d="M178 615.1 H182" stroke="#000" stroke-width="1"/><path d="M178 629.0 H184" stroke="#000" stroke-width="1"/><path d="M178 642.9 H182" stroke="#000" stroke-width="1"/><path d="M178 656.8 H184" stroke="#000" stroke-width="1"/><path d="M178 670.6 H182" stroke="#000" stroke-width="1"/><path d="M178 684.5 H184" stroke="#000" stroke-width="1"/></svg>
<div class="t " style="left:183.0px;top:565.5px;font-size:11px;line-height:15px;color:#000;letter-spacing:-0.12px;">80</div>
<div class="t " style="left:183.0px;top:593.2px;font-size:11px;line-height:15px;color:#000;letter-spacing:-0.12px;">60</div>
<div class="t " style="left:183.0px;top:621.0px;font-size:11px;line-height:15px;color:#000;letter-spacing:-0.12px;">40</div>
<div class="t " style="left:183.0px;top:648.8px;font-size:11px;line-height:15px;color:#000;letter-spacing:-0.12px;">20</div>
<div class="t " style="left:183.0px;top:676.5px;font-size:11px;line-height:15px;color:#000;">0</div>
<div class="t " style="left:159.0px;top:690.5px;font-size:11px;line-height:15px;color:#000;letter-spacing:-0.35px;">26 dB</div>
<div class="cb" style="left:525px;top:503px;"></div>
<svg class="abs" style="left:526px;top:504px" width="11" height="11" viewBox="0 0 11 11"><path d="M2.2 4.6 L4.4 8.6 L8.8 1.6" fill="none" stroke="#2a4fa8" stroke-width="1.9"/></svg>
<div class="t " style="left:543.0px;top:502.5px;font-size:11px;line-height:15px;color:#000;letter-spacing:0.01px;">Tx even/1st</div>
<div class="edit" style="left:525px;top:524px;width:101px;height:18px"></div>
<div class="t " style="left:540.0px;top:527.0px;font-size:11px;line-height:15px;color:#000;letter-spacing:-0.20px;">Tx  354  Hz</div>
<div class="abs" style="left:610px;top:525px;width:14px;height:16px;border:1px solid #c9cdd6;border-radius:2px;background:linear-gradient(#fafbfc,#e4e7ee)"></div>
<div class="abs" style="left:611px;top:532.5px;width:12px;height:1px;background:#c9cdd6"></div>
<svg class="abs" style="left:613px;top:527px" width="8" height="12" viewBox="0 0 8 12"><path d="M1 4 L4 0.8 L7 4Z" fill="#4a6fb8"/><path d="M1 8 L4 11.2 L7 8Z" fill="#4a6fb8"/></svg>
<div class="cb" style="left:632px;top:526px;"></div>
<svg class="abs" style="left:633px;top:527px" width="11" height="11" viewBox="0 0 11 11"><path d="M2.2 4.6 L4.4 8.6 L8.8 1.6" fill="none" stroke="#2a4fa8" stroke-width="1.9"/></svg>
<div class="t " style="left:650.0px;top:525.5px;font-size:11px;line-height:15px;color:#000;letter-spacing:-0.20px;">Hold Tx Freq</div>
<div class="btn" style="left:526px;top:549px;width:45px;height:17px;"></div>
<div class="btn" style="left:579px;top:549px;width:46px;height:17px;"></div>
<svg class="abs" style="left:544px;top:554px" width="9" height="8" viewBox="0 0 9 8"><path d="M0.2 7 L4.5 0.5 L8.8 7Z" fill="#000"/></svg>
<svg class="abs" style="left:597px;top:554px" width="9" height="8" viewBox="0 0 9 8"><path d="M0.2 1 L4.5 7.5 L8.8 1Z" fill="#000"/></svg>
<div class="edit" style="left:525px;top:574px;width:101px;height:18px"></div>
<div class="t " style="left:535.5px;top:577.0px;font-size:11px;line-height:15px;color:#000;letter-spacing:-0.22px;">Rx  1841  Hz</div>
<div class="abs" style="left:610px;top:575px;width:14px;height:16px;border:1px solid #c9cdd6;border-radius:2px;background:linear-gradient(#fafbfc,#e4e7ee)"></div>
<div class="abs" style="left:611px;top:582.5px;width:12px;height:1px;background:#c9cdd6"></div>
<svg class="abs" style="left:613px;top:577px" width="8" height="12" viewBox="0 0 8 12"><path d="M1 4 L4 0.8 L7 4Z" fill="#4a6fb8"/><path d="M1 8 L4 11.2 L7 8Z" fill="#4a6fb8"/></svg>
<div class="edit" style="left:525px;top:598px;width:101px;height:18px"></div>
<div class="t " style="left:541.5px;top:601.0px;font-size:11px;line-height:15px;color:#000;letter-spacing:0.00px;">Report -18</div>
<div class="abs" style="left:610px;top:599px;width:14px;height:16px;border:1px solid #c9cdd6;border-radius:2px;background:linear-gradient(#fafbfc,#e4e7ee)"></div>
<div class="abs" style="left:611px;top:606.5px;width:12px;height:1px;background:#c9cdd6"></div>
<svg class="abs" style="left:613px;top:601px" width="8" height="12" viewBox="0 0 8 12"><path d="M1 4 L4 0.8 L7 4Z" fill="#4a6fb8"/><path d="M1 8 L4 11.2 L7 8Z" fill="#4a6fb8"/></svg>
<div class="cb" style="left:525px;top:624px;"></div>
<svg class="abs" style="left:526px;top:625px" width="11" height="11" viewBox="0 0 11 11"><path d="M2.2 4.6 L4.4 8.6 L8.8 1.6" fill="none" stroke="#2a4fa8" stroke-width="1.9"/></svg>
<div class="t " style="left:543.0px;top:623.5px;font-size:11px;line-height:15px;color:#000;letter-spacing:-0.28px;">Auto Seq</div>
<div class="cb" style="left:624px;top:624px;"></div>
<svg class="abs" style="left:625px;top:625px" width="11" height="11" viewBox="0 0 11 11"><path d="M2.2 4.6 L4.4 8.6 L8.8 1.6" fill="none" stroke="#2a4fa8" stroke-width="1.9"/></svg>
<div class="t " style="left:642.0px;top:623.5px;font-size:11px;line-height:15px;color:#000;letter-spacing:-0.34px;">Call 1st</div>
<svg class="abs" style="left:715px;top:495px" width="30" height="110" viewBox="715 495 30 110"><path d="M738.5 532 L728.5 535.2 Q723.5 536.6 723.5 541.5 L723.5 550.5 Q723.5 555 728.5 556.2 L738.5 559Z" fill="#eaeaea" stroke="#2c2c2c" stroke-width="1"/><path d="M738.5 562 L728.5 565.2 Q723.5 566.6 723.5 571.5 L723.5 580.5 Q723.5 585 728.5 586.2 L738.5 589Z" fill="#eaeaea" stroke="#2c2c2c" stroke-width="1"/></svg>
<div class="" style="position:absolute;left:737px;top:502px;width:354px;height:211px;background:#fff;border:1px solid #8c909a"></div>
<svg class="abs" style="left:715px;top:495px" width="30" height="45" viewBox="715 495 30 45"><path d="M738.5 502 L727.3 505.2 Q722.3 506.6 722.3 511.5 L722.3 522.0 Q722.3 526.5 727.3 527.7 L738.5 530.5" fill="#fff" stroke="#2c2c2c" stroke-width="1"/><rect x="737.6" y="502.8" width="2" height="27" fill="#fff"/></svg>
<div class="t" style="left:720px;top:509.5px;width:20px;height:14px;line-height:14px;font-size:11px;text-align:center;transform:rotate(-90deg);color:#000">1</div>
<div class="t" style="left:720px;top:538.5px;width:20px;height:14px;line-height:14px;font-size:11px;text-align:center;transform:rotate(-90deg);color:#000">2</div>
<div class="t" style="left:720px;top:568.5px;width:20px;height:14px;line-height:14px;font-size:11px;text-align:center;transform:rotate(-90deg);color:#000">3</div>
<div class="btn" style="left:751px;top:515px;width:232px;height:21px;"></div>
<div class="t " style="left:821.8px;top:519.0px;font-size:11px;line-height:15px;color:#000;letter-spacing:-0.25px;">Generate Std Msgs</div>
<div class="t " style="left:992.5px;top:518.5px;font-size:11px;line-height:15px;color:#000;letter-spacing:-0.16px;">Next</div>
<div class="t " style="left:1040.5px;top:518.5px;font-size:11px;line-height:15px;color:#000;letter-spacing:-0.51px;">Now</div>
<div class="edit" style="left:751px;top:543px;width:233px;height:20px"></div>
<div class="t " style="left:752.5px;top:547.0px;font-size:11px;line-height:15px;color:#000;letter-spacing:-0.53px;">DL1OLI EW2ABC KO33</div>
<div class="abs" style="left:999.0px;top:547.0px;width:13px;height:13px;border-radius:50%;border:1px solid #8b8f96;background:radial-gradient(circle at 40% 35%,#fdfdfd 0,#e6e8ea 45%,#c4c8cc 100%);box-shadow:inset 0 0 0 1px #f0f0f0"></div>
<div class="abs" style="left:1002.0px;top:550.0px;width:7px;height:7px;border-radius:50%;background:radial-gradient(circle at 40% 30%,#9fe0ff 0,#2a7fd0 45%,#0a3a90 100%)"></div>
<div class="btn" style="left:1026px;top:544px;width:51px;height:19px;"></div>
<div class="t " style="left:1041.5px;top:547.0px;font-size:11px;line-height:15px;color:#000;letter-spacing:-0.35px;">Tx 1</div>
<div class="edit" style="left:751px;top:570px;width:233px;height:20px"></div>
<div class="t " style="left:752.5px;top:574.0px;font-size:11px;line-height:15px;color:#000;letter-spacing:-0.55px;">DL1OLI EW2ABC -18</div>
<div class="abs" style="left:999.0px;top:574.0px;width:13px;height:13px;border-radius:50%;border:1px solid #8b8f96;background:radial-gradient(circle at 40% 35%,#fdfdfd 0,#e6e8ea 45%,#c4c8cc 100%);box-shadow:inset 0 0 0 1px #f0f0f0"></div>
<div class="btn" style="left:1026px;top:571px;width:51px;height:19px;"></div>
<div class="t " style="left:1041.5px;top:574.0px;font-size:11px;line-height:15px;color:#000;letter-spacing:-0.35px;">Tx 2</div>
<div class="edit" style="left:751px;top:597px;width:233px;height:20px"></div>
<div class="t " style="left:752.5px;top:601.0px;font-size:11px;line-height:15px;color:#000;letter-spacing:-0.57px;">DL1OLI EW2ABC R-18</div>
<div class="abs" style="left:999.0px;top:601.0px;width:13px;height:13px;border-radius:50%;border:1px solid #8b8f96;background:radial-gradient(circle at 40% 35%,#fdfdfd 0,#e6e8ea 45%,#c4c8cc 100%);box-shadow:inset 0 0 0 1px #f0f0f0"></div>
<div class="btn" style="left:1026px;top:598px;width:51px;height:19px;"></div>
<div class="t " style="left:1041.5px;top:601.0px;font-size:11px;line-height:15px;color:#000;letter-spacing:-0.35px;">Tx 3</div>
<div class="edit" style="left:751px;top:624px;width:233px;height:20px"></div>
<div class="t " style="left:752.5px;top:628.0px;font-size:11px;line-height:15px;color:#000;letter-spacing:-0.53px;">DL1OLI EW2ABC RR73</div>
<div class="abs" style="left:999.0px;top:628.0px;width:13px;height:13px;border-radius:50%;border:1px solid #8b8f96;background:radial-gradient(circle at 40% 35%,#fdfdfd 0,#e6e8ea 45%,#c4c8cc 100%);box-shadow:inset 0 0 0 1px #f0f0f0"></div>
<div class="btn" style="left:1026px;top:625px;width:51px;height:19px;"></div>
<div class="t " style="left:1041.5px;top:628.0px;font-size:11px;line-height:15px;color:#000;letter-spacing:-0.35px;">Tx 4</div>
<div class="edit" style="left:751px;top:651px;width:233px;height:20px"></div>
<div class="t " style="left:753.5px;top:655.0px;font-size:11px;line-height:15px;color:#000;letter-spacing:-0.48px;">DL1OLI EW2ABC 73</div>
<div class="abs" style="left:999.0px;top:655.0px;width:13px;height:13px;border-radius:50%;border:1px solid #8b8f96;background:radial-gradient(circle at 40% 35%,#fdfdfd 0,#e6e8ea 45%,#c4c8cc 100%);box-shadow:inset 0 0 0 1px #f0f0f0"></div>
<div class="btn" style="left:1026px;top:652px;width:51px;height:19px;"></div>
<div class="t " style="left:1041.5px;top:655.0px;font-size:11px;line-height:15px;color:#000;letter-spacing:-0.35px;">Tx 5</div>
<div class="edit" style="left:751px;top:678px;width:233px;height:20px"></div>
<div class="t " style="left:752.5px;top:682.0px;font-size:11px;line-height:15px;color:#000;letter-spacing:-0.59px;">CQ EW2ABC KO33</div>
<div class="abs" style="left:999.0px;top:682.0px;width:13px;height:13px;border-radius:50%;border:1px solid #8b8f96;background:radial-gradient(circle at 40% 35%,#fdfdfd 0,#e6e8ea 45%,#c4c8cc 100%);box-shadow:inset 0 0 0 1px #f0f0f0"></div>
<div class="btn" style="left:1026px;top:679px;width:51px;height:19px;"></div>
<div class="t " style="left:1041.5px;top:682.0px;font-size:11px;line-height:15px;color:#000;letter-spacing:-0.35px;">Tx 6</div>
<svg class="abs" style="left:970px;top:659px" width="9" height="5" viewBox="0 0 9 5"><path d="M0 0 L4.5 5 L9 0Z" fill="#000"/></svg>
<div class="t " style="left:1101.5px;top:512.5px;font-size:11px;line-height:15px;color:#000;letter-spacing:-0.48px;">Pwr</div>
<div class="" style="position:absolute;left:1105px;top:553px;width:3px;height:160px;background:#e7eaea;border:1px solid #b6b9bd;border-top:none"></div>
<svg class="abs" style="left:1098px;top:544px" width="20" height="11" viewBox="0 0 20 11"><path d="M1.5 1.5 H13 L17.5 5.5 L13 9.5 H1.5Z" fill="#ececec" stroke="#9a9a9a" stroke-width="1"/></svg>
<div class="" style="position:absolute;left:1117px;top:549px;width:4px;height:1px;background:#bcb094"></div>
<div class="" style="position:absolute;left:1117px;top:567px;width:4px;height:1px;background:#bcb094"></div>
<div class="" style="position:absolute;left:1117px;top:584px;width:4px;height:1px;background:#bcb094"></div>
<div class="" style="position:absolute;left:1117px;top:602px;width:4px;height:1px;background:#bcb094"></div>
<div class="" style="position:absolute;left:1117px;top:620px;width:4px;height:1px;background:#bcb094"></div>
<div class="" style="position:absolute;left:1117px;top:638px;width:4px;height:1px;background:#bcb094"></div>
<div class="" style="position:absolute;left:1117px;top:655px;width:4px;height:1px;background:#bcb094"></div>
<div class="" style="position:absolute;left:1117px;top:673px;width:4px;height:1px;background:#bcb094"></div>
<div class="" style="position:absolute;left:1117px;top:691px;width:4px;height:1px;background:#bcb094"></div>
<div class="" style="position:absolute;left:1117px;top:708px;width:4px;height:1px;background:#bcb094"></div>
<div class="" style="position:absolute;left:140px;top:728px;width:150px;height:18px;background:#00ff00;border:1px solid #a0a0a0;border-bottom-color:#fff;border-right-color:#fff"></div>
<div class="t " style="left:191.5px;top:729.0px;font-size:11px;line-height:15px;color:#000;letter-spacing:-0.26px;">Receiving</div>
<div class="" style="position:absolute;left:296px;top:728px;width:80px;height:18px;background:#6699ff;border:1px solid #a0a0a0;border-bottom-color:#fff;border-right-color:#fff"></div>
<div class="t " style="left:327.0px;top:729.0px;font-size:11px;line-height:15px;color:#000;letter-spacing:-0.85px;">FT8</div>
<div class="" style="position:absolute;left:382px;top:728px;width:150px;height:18px;background:#f4f4f4;border:1px solid #a0a0a0;border-bottom-color:#fff;border-right-color:#fff"></div>
<div class="abs" style="left:806px;top:728px;width:232px;height:18px;border:1px solid #b2b2b2;border-radius:3px;background:linear-gradient(#f4f4f4 0,#dcdcdc 30%,#c8c8c8 60%,#d2d2d2 100%);overflow:hidden"><div style="width:152px;height:18px;background:linear-gradient(#d2f7d6 0,#8fe89a 18%,#22d038 35%,#06c426 60%,#0cc830 100%);box-shadow:inset 6px 0 6px -3px rgba(0,110,20,.45),inset -6px 0 6px -3px rgba(0,110,20,.45)"></div></div>
<div class="t " style="left:1041.0px;top:730.5px;font-size:11px;line-height:15px;color:#000;letter-spacing:-0.11px;">10/15</div>
<div class="" style="position:absolute;left:1073px;top:729px;width:1px;height:17px;background:#d8d8d8"></div>
<div class="t " style="left:1079.0px;top:730.5px;font-size:11px;line-height:15px;color:#000;letter-spacing:-0.53px;">WD:6m</div>
<div class="" style="position:absolute;left:1115px;top:729px;width:1px;height:17px;background:#d8d8d8"></div>
<svg class="abs" style="left:1121px;top:736px" width="12" height="12" viewBox="0 0 12 12"><g fill="#b8b8b8"><rect x="9" y="1" width="2" height="2"/><rect x="9" y="5" width="2" height="2"/><rect x="9" y="9" width="2" height="2"/><rect x="5" y="5" width="2" height="2"/><rect x="5" y="9" width="2" height="2"/><rect x="1" y="9" width="2" height="2"/></g></svg>
<div class="abs" style="left:0;top:760px;width:1280px;height:40px;background:linear-gradient(#0a0a0a 0,#0a0a0a 1px,#6a6a6a 1px,#5a5a5a 2px,#1d1d1d 3px,#1a1a1a 50%,#141414 100%)"></div>
<svg class="abs" style="left:6px;top:759px" width="42" height="42" viewBox="0 0 42 42"><defs><radialGradient id="orb" cx=".5" cy=".75" r=".75"><stop offset="0" stop-color="#49c6f5"/><stop offset=".45" stop-color="#1c6cb4"/><stop offset="1" stop-color="#0e2f60"/></radialGradient><linearGradient id="orbh" x1="0" y1="0" x2="0" y2="1"><stop offset="0" stop-color="#fff" stop-opacity=".75"/><stop offset="1" stop-color="#fff" stop-opacity=".05"/></linearGradient></defs><circle cx="21" cy="21" r="18.6" fill="url(#orb)" stroke="#8fb8d8" stroke-width="1.2"/><path d="M4 18 A17.5 17.5 0 0 1 38 18 C30 23 12 23 4 18Z" fill="url(#orbh)" opacity=".55"/><g transform="translate(21.2,20.6) scale(1.17) translate(-20.2,-20.6)"><path d="M13.5 12.5 C16 11 18.5 11 20.5 12.6 L19 19.8 C17 18.6 14.5 18.6 12 20Z" fill="#f0582a"/><path d="M22 13 C24.5 14.4 27 14.2 29.6 12.8 L28 20 C25.6 21.4 23 21.4 20.6 20Z" fill="#8cc63a"/><path d="M11.6 21.6 C14 20.2 16.6 20.2 18.8 21.6 L17.2 28.6 C15 27.2 12.6 27.4 10.2 28.6Z" fill="#3a9ae8"/><path d="M20.2 22 C22.6 23.4 25.2 23.4 27.6 22 L26 29 C23.6 30.4 21 30.4 18.8 29Z" fill="#f8b820"/></g></svg>
<svg class="abs" style="left:72px;top:763px" width="34" height="34" viewBox="0 0 34 34"><defs><linearGradient id="ieg" x1="0" y1="0" x2="0" y2="1"><stop offset="0" stop-color="#6fd2ff"/><stop offset="1" stop-color="#1488d8"/></linearGradient></defs><text x="18" y="30.5" font-size="48" font-weight="bold" text-anchor="middle" fill="url(#ieg)" font-family="Liberation Sans, sans-serif">e</text><path d="M4 30 C-2 23 9 6 27 2.5 C32 1.6 33.6 4.6 31 9" fill="none" stroke="#f6c21a" stroke-width="2.6" stroke-linecap="round"/><path d="M4 30 C6 32.6 10 31 13 28.4" fill="none" stroke="#f6c21a" stroke-width="2.2" stroke-linecap="round"/></svg>
<svg class="abs" style="left:134px;top:765px" width="34" height="32" viewBox="0 0 34 32"><path d="M2 6 Q2 3 5 3 H13 L16 6 H30 Q32 6 32 8 V27 Q32 29 30 29 H4 Q2 29 2 27Z" fill="#f3dc8c" stroke="#c8a84a" stroke-width=".8"/><rect x="5" y="3.4" width="5" height="2" fill="#2ab040"/><rect x="13" y="6" width="6" height="2.2" fill="#e03a30"/><rect x="21" y="8.5" width="7" height="2.2" fill="#2a8ae0"/><path d="M2 11 H32 V27 Q32 29 30 29 H4 Q2 29 2 27Z" fill="#f7e6a4" stroke="#d4b85c" stroke-width=".6"/><path d="M7 30 V21 Q7 19 9 19 H25 Q27 19 27 21 V30 H22 V24 H12 V30Z" fill="#7cc4ee" stroke="#3a8ac8" stroke-width=".8"/><circle cx="9" cy="20" r="2.2" fill="#fff" opacity=".9"/></svg>
<div class="abs" style="left:184px;top:761px;width:58px;height:38px;border:1px solid #b4b4b4;border-radius:3px;background:linear-gradient(160deg,#a0a0a0 0,#6c6c6c 30%,#4a4a4a 55%,#3c3c3c 100%);box-shadow:inset 0 0 0 1px rgba(255,255,255,.25),0 0 0 1px #111"></div>
<div class="abs" style="left:246px;top:761px;width:58px;height:38px;border:1px solid #b4b4b4;border-radius:3px;background:linear-gradient(160deg,#a0a0a0 0,#6c6c6c 30%,#4a4a4a 55%,#3c3c3c 100%);box-shadow:inset 0 0 0 1px rgba(255,255,255,.25),0 0 0 1px #111"></div>
<div class="abs" style="left:361px;top:761px;width:5px;height:38px;border:1px solid #a8a8a8;border-left:none;border-radius:0 3px 3px 0;background:linear-gradient(#8a8a8a,#4a4a4a)"></div>
<div class="abs" style="left:308px;top:761px;width:53px;height:38px;border:1px solid #b4b4b4;border-radius:3px;background:linear-gradient(160deg,#a0a0a0 0,#6c6c6c 30%,#4a4a4a 55%,#3c3c3c 100%);box-shadow:inset 0 0 0 1px rgba(255,255,255,.25),0 0 0 1px #111"></div>
<svg class="abs" style="left:197px;top:764px" width="32" height="32" viewBox="0 0 32 32"><defs><linearGradient id="opg" x1="0" y1="0" x2="1" y2="1"><stop offset="0" stop-color="#ff2838"/><stop offset="1" stop-color="#c80818"/></linearGradient></defs><path fill-rule="evenodd" d="M16 1 A15 15 0 1 0 16 31 A15 15 0 1 0 16 1Z M16 4.2 C11.6 4.2 8.6 9.4 8.6 16 C8.6 22.6 11.6 27.8 16 27.8 C20.4 27.8 23.4 22.6 23.4 16 C23.4 9.4 20.4 4.2 16 4.2Z" fill="url(#opg)"/></svg>
<svg class="abs" style="left:259px;top:764px" width="32" height="32" viewBox="0 0 32 32"><defs><linearGradient id="gs2" x1="0" y1="0" x2="0" y2="1"><stop offset="0" stop-color="#0a86d8"/><stop offset=".45" stop-color="#0350b0"/><stop offset="1" stop-color="#010a66"/></linearGradient></defs><rect width="32" height="32" fill="url(#gs2)"/><path d="M0 20 C3 27 7 28 10 22 C13 16 16 6 21 6 C26 6 28 14 32 19" fill="none" stroke="#39414b" stroke-width="1.6"/><path d="M0 23 C3 16 6 11 9 11 C13 11 15 21 20 21 C25 21 27 10 32 8" fill="none" stroke="#39414b" stroke-width="1.6"/></svg>
<svg class="abs" style="left:318px;top:764px" width="32" height="32" viewBox="0 0 32 32"><defs><radialGradient id="gg2" cx=".58" cy=".6" r=".62"><stop offset="0" stop-color="#7088ff"/><stop offset=".55" stop-color="#3a48ff"/><stop offset="1" stop-color="#1a1cc8"/></radialGradient></defs><circle cx="16" cy="16" r="15.6" fill="url(#gg2)"/><path d="M9 3.2 C11 1.4 14 0.6 17 0.5 C20 0.4 23 1.4 25 3 C27.4 5 29.6 8 30.8 11.5 C31.4 14 31.2 16.5 30.6 18 C29.6 17.6 28.8 16.4 28.2 14.6 C27.8 12.4 26.8 10.2 25.4 8.4 C24 6.6 22 5.2 19.6 4.6 C17.6 4.2 15.6 4 13.6 4.6 L12 5.4 L13.4 6.6 L16.4 6 L18.6 6.8 L21 8.8 L19.6 10 L18.2 9 L16.4 9.4 L18.4 11.6 L19.8 14.6 L18.8 16.6 L17.6 18.2 L16.4 16.8 L15 15.8 L12.4 16.2 L9.4 16 L8.6 12.6 L8 9 L9.6 7 L8.4 5.6Z" fill="#1ee83a"/><path d="M15.4 11 L16.6 10.6 L17.2 12.4 L16 12.8Z" fill="#3a48ff"/><path d="M16.8 25.6 C18.6 24.6 21.4 24.6 23.6 25 L26.6 25.6 C26 27.4 24.6 29 22.8 30 C21.2 30.9 19.6 31.3 18.4 31.2 C17.4 29.8 16.4 27.6 16.8 25.6Z" fill="#1ee83a"/></svg>
<div class="t " style="left:1042.5px;top:769.8px;font-size:12px;line-height:16px;color:#fff;letter-spacing:-1.17px;">RU</div>
<svg class="abs" style="left:1073.5px;top:778.3px" width="8.5" height="5" viewBox="0 0 9 6"><path d="M0 5.5 L4.5 0.5 L9 5.5Z" fill="#e8ecf4"/></svg>
<svg class="abs" style="left:1093px;top:773px" width="18" height="16" viewBox="0 0 18 16"><path d="M2.3 0.8 V15.2" stroke="#fff" stroke-width="1.5"/><path d="M3.4 2 C5.5 1.2 7.5 1.6 9.6 2.2 L9.6 4.2 C11.6 4.8 14 4.6 16.4 4 C15.4 6.2 13.6 8 11 8.6 C9.6 8.8 9 8.6 8.4 8.2 C6.6 7.6 5 7.8 3.4 8.6Z" fill="#fff"/></svg>
<svg class="abs" style="left:1118px;top:773px" width="16" height="17" viewBox="0 0 16 17"><rect x="1.2" y="2.6" width="8.6" height="12.6" rx="1.4" fill="none" stroke="#fff" stroke-width="1.5"/><rect x="3.6" y="0.9" width="3.8" height="2" fill="#fff"/><path d="M6 4.6 H14.4 V7.4 Q14.4 10 11.6 10.4 V14.6 H9.2 V10.4 Q6 10 6 7.4Z" fill="#fff" stroke="#1a1a1a" stroke-width=".9"/><rect x="7.7" y="1.2" width="1.5" height="3.6" fill="#fff"/><rect x="11.3" y="1.2" width="1.5" height="3.6" fill="#fff"/></svg>
<svg class="abs" style="left:1142.5px;top:775px" width="16" height="11" viewBox="0 0 16 11"><g fill="#fff"><rect x="0" y="8.5" width="2" height="2.5"/><rect x="3" y="6.5" width="2.2" height="4.5"/><rect x="6.2" y="4.5" width="2.2" height="6.5"/><rect x="9.4" y="2.5" width="2.2" height="8.5"/><rect x="12.6" y="0.3" width="2.2" height="10.7"/></g></svg>
<svg class="abs" style="left:1166.5px;top:773.5px" width="15" height="15" viewBox="0 0 16 16"><path d="M1 5.5 H4 L8 1.5 V14.5 L4 10.5 H1Z" fill="#fff"/><path d="M10 5 Q11.6 8 10 11 M12 3 Q15 8 12 13" fill="none" stroke="#fff" stroke-width="1.2"/></svg>
<div class="t " style="left:1215.0px;top:765.0px;font-size:12px;line-height:16px;color:#fff;letter-spacing:-0.09px;">9:41</div>
<div class="t " style="left:1199.5px;top:781.5px;font-size:12px;line-height:16px;color:#fff;letter-spacing:-0.61px;">21.06.2020</div>
<div class="abs" style="left:1266px;top:761px;width:14px;height:39px;border:1px solid #8a8a8a;border-right:none;background:linear-gradient(160deg,#8a8a8a,#3a3a3a 45%,#222)"></div>
</body></html>
